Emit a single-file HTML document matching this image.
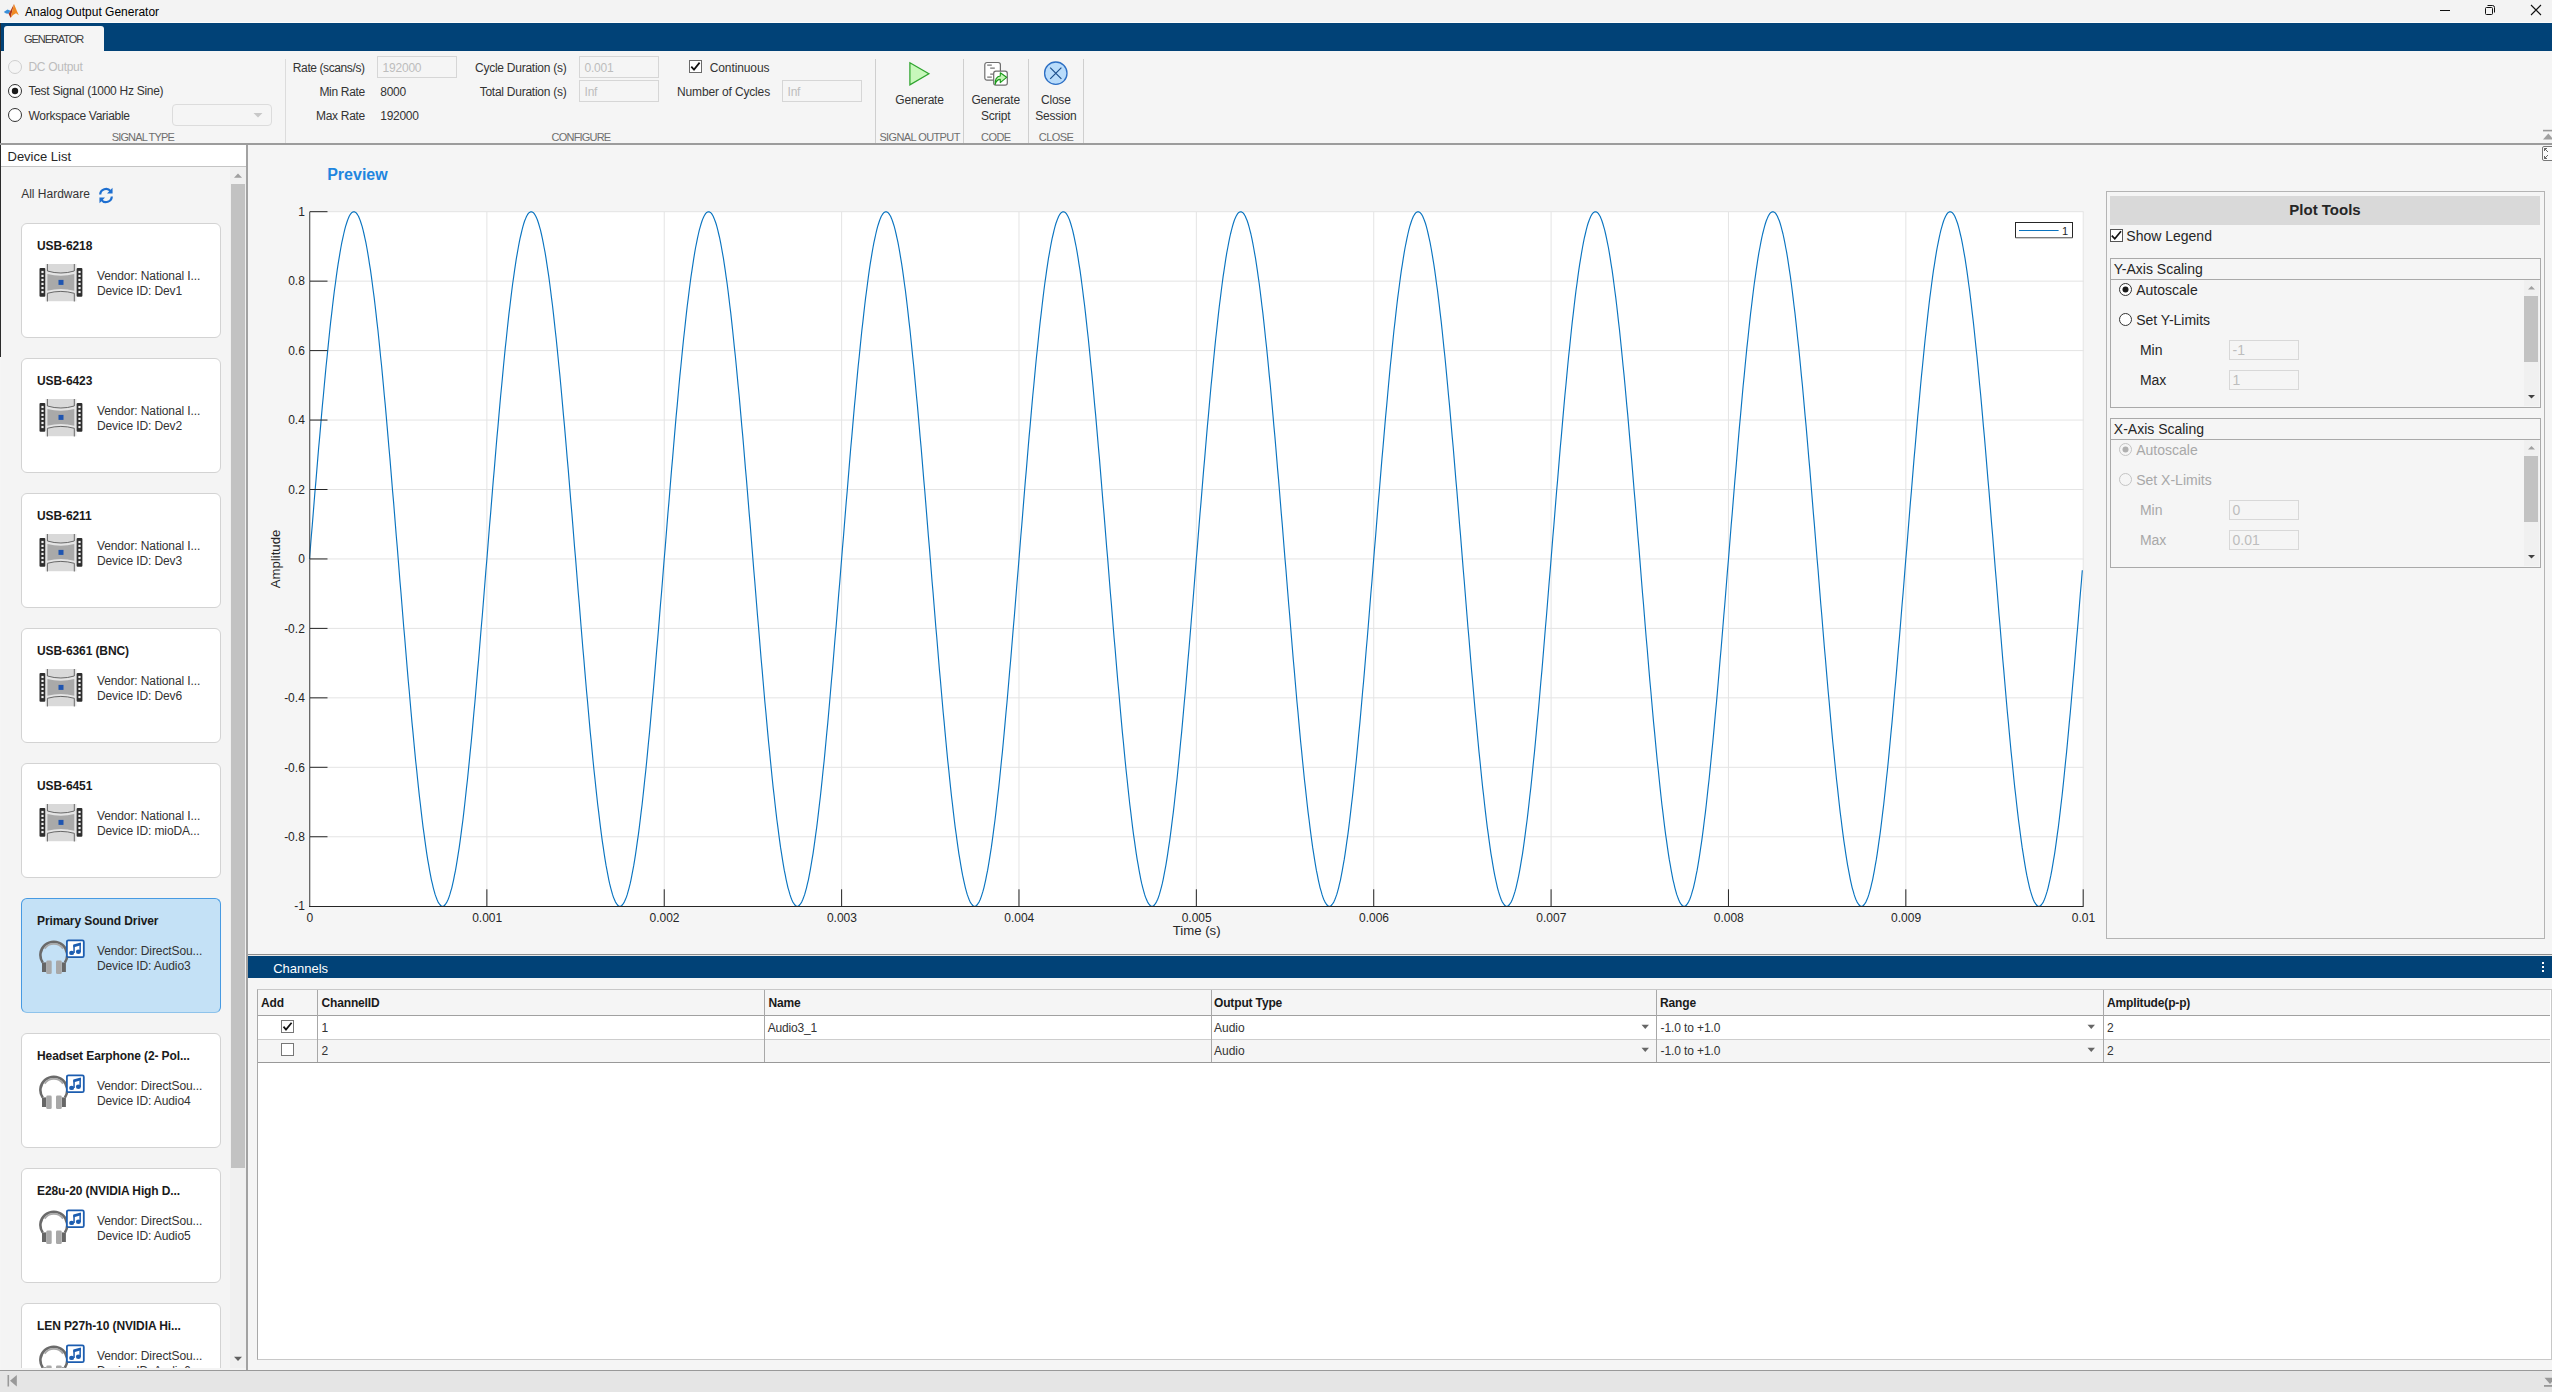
<!DOCTYPE html>
<html><head><meta charset="utf-8"><title>Analog Output Generator</title>
<style>
html,body{margin:0;padding:0;}
body{width:2552px;height:1392px;position:relative;overflow:hidden;background:#f5f5f5;font-family:"Liberation Sans", sans-serif;}
</style></head><body>
<div style="position:absolute;left:0px;top:0px;width:2552px;height:22px;background:#f3f3f3"></div><div style="position:absolute;left:0px;top:22px;width:2552px;height:1px;background:#fbfbfb"></div><svg style="position:absolute;left:0;top:0" width="24" height="22" viewBox="0 0 24 22">
<polygon points="3.8,12 7.5,9.6 10.5,10.8 8.6,13.8 6,13.4" fill="#3b8fd9"/>
<polygon points="8.6,13.8 10.5,10.8 14,4 12,12 10.6,17.9" fill="#b0361c"/>
<polygon points="14,4 16.5,10 18.8,15.2 16,13.2 13,15 10.6,17.9 12,12" fill="#f08a24"/>
</svg><div style="position:absolute;left:25px;top:5.54px;font-size:12px;line-height:13.80px;color:#000;font-weight:400;white-space:nowrap;">Analog Output Generator</div><div style="position:absolute;left:2440px;top:10px;width:10px;height:1px;background:#111"></div><svg style="position:absolute;left:2480px;top:0" width="70" height="22" viewBox="2480 0 70 22">
<rect x="2485.5" y="7.5" width="7" height="7" rx="1" fill="none" stroke="#111" stroke-width="1"/>
<path d="M2487.5 5.5 h5 a2 2 0 0 1 2 2 v5" fill="none" stroke="#111" stroke-width="1"/>
<path d="M2531 5 L2541 15 M2541 5 L2531 15" stroke="#111" stroke-width="1.1"/>
</svg><div style="position:absolute;left:0px;top:23px;width:2552px;height:28px;background:#014277"></div><div style="position:absolute;left:0px;top:23px;width:1px;height:334px;background:#2b2b2b"></div><div style="position:absolute;left:4px;top:26px;width:100px;height:25px;background:#f5f5f5;border-radius:3px 3px 0 0"></div><div style="position:absolute;left:24px;top:32.56px;font-size:11px;line-height:12.65px;color:#3c3c3c;font-weight:400;white-space:nowrap;letter-spacing:-1.05px;">GENERATOR</div><div style="position:absolute;left:1px;top:51px;width:2551px;height:92px;background:#f5f5f5"></div><div style="position:absolute;left:0px;top:143px;width:2552px;height:2px;background:#9c9c9c"></div><svg style="position:absolute;left:7px;top:59px" width="16" height="16"><circle cx="8" cy="8" r="6.5" fill="#f5f5f5" stroke="#cfcfcf" stroke-width="1"/></svg><svg style="position:absolute;left:7px;top:83px" width="16" height="16"><circle cx="8" cy="8" r="6.5" fill="#fff" stroke="#333" stroke-width="1"/><circle cx="8" cy="8" r="3.2" fill="#1a1a1a"/></svg><svg style="position:absolute;left:7px;top:107px" width="16" height="16"><circle cx="8" cy="8" r="6.5" fill="#fff" stroke="#333" stroke-width="1"/></svg><div style="position:absolute;left:28.5px;top:61.14px;font-size:12px;line-height:13.80px;color:#bcbcbc;font-weight:400;white-space:nowrap;letter-spacing:-0.3px;">DC Output</div><div style="position:absolute;left:28.5px;top:85.24px;font-size:12px;line-height:13.80px;color:#333;font-weight:400;white-space:nowrap;letter-spacing:-0.28px;">Test Signal (1000 Hz Sine)</div><div style="position:absolute;left:28.5px;top:109.94px;font-size:12px;line-height:13.80px;color:#333;font-weight:400;white-space:nowrap;letter-spacing:-0.28px;">Workspace Variable</div><div style="position:absolute;left:172px;top:104px;width:98px;height:20px;border:1px solid #dcdcdc;border-radius:4px;background:#f5f5f5"></div><svg style="position:absolute;left:252px;top:110px" width="12" height="10"><path d="M1.5 3 L10.5 3 L6 7.5 Z" fill="#c8c8c8"/></svg><div style="position:absolute;left:111.7px;top:131.36px;font-size:11px;line-height:12.65px;color:#6e6e6e;font-weight:400;white-space:nowrap;letter-spacing:-0.85px;">SIGNAL TYPE</div><div style="position:absolute;left:285px;top:59px;width:1px;height:84px;background:#dcdcdc"></div><div style="position:absolute;right:2187.4px;top:61.94px;font-size:12px;line-height:13.80px;color:#333;font-weight:400;white-space:nowrap;letter-spacing:-0.4px;">Rate (scans/s)</div><div style="position:absolute;right:2187px;top:85.94px;font-size:12px;line-height:13.80px;color:#333;font-weight:400;white-space:nowrap;letter-spacing:-0.3px;">Min Rate</div><div style="position:absolute;right:2187px;top:109.94px;font-size:12px;line-height:13.80px;color:#333;font-weight:400;white-space:nowrap;letter-spacing:-0.3px;">Max Rate</div><div style="position:absolute;left:377px;top:56px;width:78px;height:20px;border:1px solid #d6d6d6;background:#f5f5f5"></div><div style="position:absolute;left:382.5px;top:61.54px;font-size:12px;line-height:13.80px;color:#bdbdbd;font-weight:400;white-space:nowrap;letter-spacing:-0.2px;">192000</div><div style="position:absolute;left:380.3px;top:85.94px;font-size:12px;line-height:13.80px;color:#333;font-weight:400;white-space:nowrap;letter-spacing:-0.3px;">8000</div><div style="position:absolute;left:380.3px;top:109.94px;font-size:12px;line-height:13.80px;color:#333;font-weight:400;white-space:nowrap;letter-spacing:-0.3px;">192000</div><div style="position:absolute;right:1985.5px;top:61.94px;font-size:12px;line-height:13.80px;color:#333;font-weight:400;white-space:nowrap;letter-spacing:-0.25px;">Cycle Duration (s)</div><div style="position:absolute;right:1985.5px;top:85.94px;font-size:12px;line-height:13.80px;color:#333;font-weight:400;white-space:nowrap;letter-spacing:-0.25px;">Total Duration (s)</div><div style="position:absolute;left:579px;top:56px;width:78px;height:20px;border:1px solid #d6d6d6;background:#f5f5f5"></div><div style="position:absolute;left:584.5px;top:61.54px;font-size:12px;line-height:13.80px;color:#bdbdbd;font-weight:400;white-space:nowrap;letter-spacing:-0.2px;">0.001</div><div style="position:absolute;left:579px;top:80px;width:78px;height:20px;border:1px solid #d6d6d6;background:#f5f5f5"></div><div style="position:absolute;left:584.5px;top:85.54px;font-size:12px;line-height:13.80px;color:#bdbdbd;font-weight:400;white-space:nowrap;letter-spacing:-0.2px;">Inf</div><svg style="position:absolute;left:689px;top:60px" width="14" height="14"><rect x="0.5" y="0.5" width="12" height="12" fill="#fff" stroke="#6a6a6a"/><path d="M2.3 6.6 L5 9.6 L10.6 2.6" fill="none" stroke="#111" stroke-width="1.7"/></svg><div style="position:absolute;left:709.7px;top:61.94px;font-size:12px;line-height:13.80px;color:#333;font-weight:400;white-space:nowrap;letter-spacing:-0.1px;">Continuous</div><div style="position:absolute;right:1782px;top:85.94px;font-size:12px;line-height:13.80px;color:#333;font-weight:400;white-space:nowrap;letter-spacing:-0.15px;">Number of Cycles</div><div style="position:absolute;left:782px;top:80px;width:78px;height:20px;border:1px solid #d6d6d6;background:#f5f5f5"></div><div style="position:absolute;left:787.5px;top:85.54px;font-size:12px;line-height:13.80px;color:#bdbdbd;font-weight:400;white-space:nowrap;letter-spacing:-0.2px;">Inf</div><div style="position:absolute;left:81px;width:1000px;text-align:center;top:130.86px;font-size:11px;line-height:12.65px;color:#6e6e6e;font-weight:400;white-space:nowrap;letter-spacing:-0.8px;">CONFIGURE</div><div style="position:absolute;left:875px;top:59px;width:1px;height:84px;background:#cfcfcf"></div><svg style="position:absolute;left:905px;top:58px" width="30" height="32"><path d="M4.9 4.8 L23.9 15.7 L4.9 26.9 Z" fill="#c8f8bb" stroke="#30a530" stroke-width="1.25" stroke-linejoin="miter"/></svg><div style="position:absolute;left:419.5px;width:1000px;text-align:center;top:94.14px;font-size:12px;line-height:13.80px;color:#333;font-weight:400;white-space:nowrap;letter-spacing:-0.2px;">Generate</div><div style="position:absolute;left:419.6px;width:1000px;text-align:center;top:130.86px;font-size:11px;line-height:12.65px;color:#6e6e6e;font-weight:400;white-space:nowrap;letter-spacing:-0.6px;">SIGNAL OUTPUT</div><div style="position:absolute;left:963px;top:59px;width:1px;height:84px;background:#cfcfcf"></div><svg style="position:absolute;left:980px;top:58px" width="32" height="32">
<rect x="4.8" y="4.5" width="15.6" height="17.6" rx="2.2" fill="#fff" stroke="#6e6e6e" stroke-width="1.2"/>
<path d="M7.2 7.1 h4.6 M10.2 10.2 h4.6 M10.2 16.1 h3.4 M7.2 19.2 h4.6" stroke="#777" stroke-width="1.2"/>
<rect x="13.7" y="13.2" width="13.6" height="14" rx="2.2" fill="#fff" stroke="#6e6e6e" stroke-width="1.2"/>
<path d="M20.3 14.7 L26.6 19.3 L20.3 24.6 V21.4 C17.5 21.4 16 23.5 15.2 26.4 C14.8 22 16.5 18.2 20.3 18 Z" fill="#c3f5b5" stroke="#1a9a1a" stroke-width="1.1" stroke-linejoin="round"/>
</svg><div style="position:absolute;left:495.70000000000005px;width:1000px;text-align:center;top:94.14px;font-size:12px;line-height:13.80px;color:#333;font-weight:400;white-space:nowrap;letter-spacing:-0.2px;">Generate</div><div style="position:absolute;left:495.70000000000005px;width:1000px;text-align:center;top:109.94px;font-size:12px;line-height:13.80px;color:#333;font-weight:400;white-space:nowrap;letter-spacing:-0.2px;">Script</div><div style="position:absolute;left:495.79999999999995px;width:1000px;text-align:center;top:130.86px;font-size:11px;line-height:12.65px;color:#6e6e6e;font-weight:400;white-space:nowrap;letter-spacing:-0.6px;">CODE</div><div style="position:absolute;left:1028px;top:59px;width:1px;height:84px;background:#cfcfcf"></div><svg style="position:absolute;left:1040px;top:58px" width="32" height="32">
<circle cx="15.8" cy="15.2" r="11.2" fill="#b9dcfb" stroke="#2d6fc4" stroke-width="1.3"/>
<path d="M10.2 9.6 L21.4 20.8 M21.4 9.6 L10.2 20.8" stroke="#1d4f8c" stroke-width="1.2"/>
</svg><div style="position:absolute;left:555.8px;width:1000px;text-align:center;top:94.14px;font-size:12px;line-height:13.80px;color:#333;font-weight:400;white-space:nowrap;letter-spacing:-0.2px;">Close</div><div style="position:absolute;left:555.8px;width:1000px;text-align:center;top:109.94px;font-size:12px;line-height:13.80px;color:#333;font-weight:400;white-space:nowrap;letter-spacing:-0.2px;">Session</div><div style="position:absolute;left:556px;width:1000px;text-align:center;top:130.86px;font-size:11px;line-height:12.65px;color:#6e6e6e;font-weight:400;white-space:nowrap;letter-spacing:-0.6px;">CLOSE</div><div style="position:absolute;left:1083px;top:59px;width:1px;height:84px;background:#cfcfcf"></div><svg style="position:absolute;left:2540px;top:126px" width="12" height="16"><rect x="3" y="3.8" width="10" height="1.6" fill="#999"/><path d="M3 13.5 L8.3 7.5 L13.5 13.5 Z" fill="#a0a0a0"/></svg><div style="position:absolute;left:1px;top:145px;width:245px;height:21px;background:#fff"></div><div style="position:absolute;left:0px;top:145px;width:1px;height:212px;background:#2b2b2b"></div><div style="position:absolute;left:7.5px;top:149.82px;font-size:13px;line-height:14.95px;color:#262626;font-weight:400;white-space:nowrap;">Device List</div><div style="position:absolute;left:1px;top:166px;width:245px;height:1px;background:#c4c4c4"></div><div style="position:absolute;left:1px;top:167px;width:245px;height:1203px;background:#f4f4f4"></div><div style="position:absolute;left:246px;top:145px;width:2px;height:1225px;background:#a2a2a2"></div><div style="position:absolute;left:21.2px;top:187.94px;font-size:12px;line-height:13.80px;color:#333;font-weight:400;white-space:nowrap;">All Hardware</div><svg style="position:absolute;left:96px;top:185px" width="20" height="20" viewBox="0 0 20 20">
<path d="M4.2 9.5 A5.8 5.8 0 0 1 14.6 6.2" fill="none" stroke="#1e6fd0" stroke-width="2.2"/>
<path d="M16.5 2.8 L16.6 8.6 L11 8.4 Z" fill="#1e6fd0"/>
<path d="M15.8 11.5 A5.8 5.8 0 0 1 5.4 14.8" fill="none" stroke="#1e6fd0" stroke-width="2.2"/>
<path d="M3.5 18.2 L3.4 12.4 L9 12.6 Z" fill="#1e6fd0"/>
</svg><div style="position:absolute;left:0;top:167px;width:229px;height:1201px;overflow:hidden"><div style="position:absolute;left:21px;top:56.0px;width:198px;height:113px;background:#fff;border:1px solid #d3d3d3;border-radius:6px"></div><div style="position:absolute;left:37px;top:72.94px;font-size:12px;line-height:13.80px;color:#1a1a1a;font-weight:700;white-space:nowrap;letter-spacing:-0.1px;">USB-6218</div><div style="position:absolute;left:96.9px;top:102.64px;font-size:12px;line-height:13.80px;color:#333;font-weight:400;white-space:nowrap;letter-spacing:-0.1px;">Vendor: National I...</div><div style="position:absolute;left:96.9px;top:117.64px;font-size:12px;line-height:13.80px;color:#333;font-weight:400;white-space:nowrap;letter-spacing:-0.1px;">Device ID: Dev1</div><svg style="position:absolute;left:39.0px;top:97.0px" width="44" height="38" viewBox="0 0 44 38">
<rect x="6.6" y="-0.3" width="30.8" height="37.6" fill="#e4e4e4"/>
<path d="M8.4 0 V7 Q21.85 11 35.3 7 V0 Z" fill="#d9d9d9"/>
<path d="M8.4 37 V29.3 Q21.85 25.5 35.3 29.3 V37 Z" fill="#d9d9d9"/>
<path d="M8.4 10 Q21.85 13.6 35.3 10 V26.7 Q21.85 23.1 8.4 26.7 Z" fill="#a9a9a9"/>
<path d="M8.4 -0.5 V7 Q21.85 11 35.3 7 V-0.5" fill="none" stroke="#5a5a5a" stroke-width="0.9"/>
<path d="M8.4 37.5 V29.3 Q21.85 25.5 35.3 29.3 V37.5" fill="none" stroke="#5a5a5a" stroke-width="0.9"/>
<rect x="0.5" y="4.1" width="5.8" height="28.6" rx="1" fill="#2e2e2e"/>
<rect x="37.6" y="4.1" width="5.8" height="28.6" rx="1" fill="#2e2e2e"/>
<g fill="#f2f2f2"><rect x="2.4" y="6.9" width="2.2" height="2.2"/><rect x="39.4" y="6.9" width="2.2" height="2.2"/><rect x="2.4" y="10.8" width="2.2" height="2.2"/><rect x="39.4" y="10.8" width="2.2" height="2.2"/><rect x="2.4" y="14.8" width="2.2" height="2.2"/><rect x="39.4" y="14.8" width="2.2" height="2.2"/><rect x="2.4" y="18.8" width="2.2" height="2.2"/><rect x="39.4" y="18.8" width="2.2" height="2.2"/><rect x="2.4" y="22.9" width="2.2" height="2.2"/><rect x="39.4" y="22.9" width="2.2" height="2.2"/><rect x="2.4" y="26.9" width="2.2" height="2.2"/><rect x="39.4" y="26.9" width="2.2" height="2.2"/></g>
<rect x="19.5" y="15.9" width="5" height="5" fill="#1f55b0"/>
</svg><div style="position:absolute;left:21px;top:191.0px;width:198px;height:113px;background:#fff;border:1px solid #d3d3d3;border-radius:6px"></div><div style="position:absolute;left:37px;top:207.94px;font-size:12px;line-height:13.80px;color:#1a1a1a;font-weight:700;white-space:nowrap;letter-spacing:-0.1px;">USB-6423</div><div style="position:absolute;left:96.9px;top:237.64px;font-size:12px;line-height:13.80px;color:#333;font-weight:400;white-space:nowrap;letter-spacing:-0.1px;">Vendor: National I...</div><div style="position:absolute;left:96.9px;top:252.64px;font-size:12px;line-height:13.80px;color:#333;font-weight:400;white-space:nowrap;letter-spacing:-0.1px;">Device ID: Dev2</div><svg style="position:absolute;left:39.0px;top:232.0px" width="44" height="38" viewBox="0 0 44 38">
<rect x="6.6" y="-0.3" width="30.8" height="37.6" fill="#e4e4e4"/>
<path d="M8.4 0 V7 Q21.85 11 35.3 7 V0 Z" fill="#d9d9d9"/>
<path d="M8.4 37 V29.3 Q21.85 25.5 35.3 29.3 V37 Z" fill="#d9d9d9"/>
<path d="M8.4 10 Q21.85 13.6 35.3 10 V26.7 Q21.85 23.1 8.4 26.7 Z" fill="#a9a9a9"/>
<path d="M8.4 -0.5 V7 Q21.85 11 35.3 7 V-0.5" fill="none" stroke="#5a5a5a" stroke-width="0.9"/>
<path d="M8.4 37.5 V29.3 Q21.85 25.5 35.3 29.3 V37.5" fill="none" stroke="#5a5a5a" stroke-width="0.9"/>
<rect x="0.5" y="4.1" width="5.8" height="28.6" rx="1" fill="#2e2e2e"/>
<rect x="37.6" y="4.1" width="5.8" height="28.6" rx="1" fill="#2e2e2e"/>
<g fill="#f2f2f2"><rect x="2.4" y="6.9" width="2.2" height="2.2"/><rect x="39.4" y="6.9" width="2.2" height="2.2"/><rect x="2.4" y="10.8" width="2.2" height="2.2"/><rect x="39.4" y="10.8" width="2.2" height="2.2"/><rect x="2.4" y="14.8" width="2.2" height="2.2"/><rect x="39.4" y="14.8" width="2.2" height="2.2"/><rect x="2.4" y="18.8" width="2.2" height="2.2"/><rect x="39.4" y="18.8" width="2.2" height="2.2"/><rect x="2.4" y="22.9" width="2.2" height="2.2"/><rect x="39.4" y="22.9" width="2.2" height="2.2"/><rect x="2.4" y="26.9" width="2.2" height="2.2"/><rect x="39.4" y="26.9" width="2.2" height="2.2"/></g>
<rect x="19.5" y="15.9" width="5" height="5" fill="#1f55b0"/>
</svg><div style="position:absolute;left:21px;top:326.0px;width:198px;height:113px;background:#fff;border:1px solid #d3d3d3;border-radius:6px"></div><div style="position:absolute;left:37px;top:342.94px;font-size:12px;line-height:13.80px;color:#1a1a1a;font-weight:700;white-space:nowrap;letter-spacing:-0.1px;">USB-6211</div><div style="position:absolute;left:96.9px;top:372.64px;font-size:12px;line-height:13.80px;color:#333;font-weight:400;white-space:nowrap;letter-spacing:-0.1px;">Vendor: National I...</div><div style="position:absolute;left:96.9px;top:387.64px;font-size:12px;line-height:13.80px;color:#333;font-weight:400;white-space:nowrap;letter-spacing:-0.1px;">Device ID: Dev3</div><svg style="position:absolute;left:39.0px;top:367.0px" width="44" height="38" viewBox="0 0 44 38">
<rect x="6.6" y="-0.3" width="30.8" height="37.6" fill="#e4e4e4"/>
<path d="M8.4 0 V7 Q21.85 11 35.3 7 V0 Z" fill="#d9d9d9"/>
<path d="M8.4 37 V29.3 Q21.85 25.5 35.3 29.3 V37 Z" fill="#d9d9d9"/>
<path d="M8.4 10 Q21.85 13.6 35.3 10 V26.7 Q21.85 23.1 8.4 26.7 Z" fill="#a9a9a9"/>
<path d="M8.4 -0.5 V7 Q21.85 11 35.3 7 V-0.5" fill="none" stroke="#5a5a5a" stroke-width="0.9"/>
<path d="M8.4 37.5 V29.3 Q21.85 25.5 35.3 29.3 V37.5" fill="none" stroke="#5a5a5a" stroke-width="0.9"/>
<rect x="0.5" y="4.1" width="5.8" height="28.6" rx="1" fill="#2e2e2e"/>
<rect x="37.6" y="4.1" width="5.8" height="28.6" rx="1" fill="#2e2e2e"/>
<g fill="#f2f2f2"><rect x="2.4" y="6.9" width="2.2" height="2.2"/><rect x="39.4" y="6.9" width="2.2" height="2.2"/><rect x="2.4" y="10.8" width="2.2" height="2.2"/><rect x="39.4" y="10.8" width="2.2" height="2.2"/><rect x="2.4" y="14.8" width="2.2" height="2.2"/><rect x="39.4" y="14.8" width="2.2" height="2.2"/><rect x="2.4" y="18.8" width="2.2" height="2.2"/><rect x="39.4" y="18.8" width="2.2" height="2.2"/><rect x="2.4" y="22.9" width="2.2" height="2.2"/><rect x="39.4" y="22.9" width="2.2" height="2.2"/><rect x="2.4" y="26.9" width="2.2" height="2.2"/><rect x="39.4" y="26.9" width="2.2" height="2.2"/></g>
<rect x="19.5" y="15.9" width="5" height="5" fill="#1f55b0"/>
</svg><div style="position:absolute;left:21px;top:461.0px;width:198px;height:113px;background:#fff;border:1px solid #d3d3d3;border-radius:6px"></div><div style="position:absolute;left:37px;top:477.94px;font-size:12px;line-height:13.80px;color:#1a1a1a;font-weight:700;white-space:nowrap;letter-spacing:-0.1px;">USB-6361 (BNC)</div><div style="position:absolute;left:96.9px;top:507.64px;font-size:12px;line-height:13.80px;color:#333;font-weight:400;white-space:nowrap;letter-spacing:-0.1px;">Vendor: National I...</div><div style="position:absolute;left:96.9px;top:522.64px;font-size:12px;line-height:13.80px;color:#333;font-weight:400;white-space:nowrap;letter-spacing:-0.1px;">Device ID: Dev6</div><svg style="position:absolute;left:39.0px;top:502.0px" width="44" height="38" viewBox="0 0 44 38">
<rect x="6.6" y="-0.3" width="30.8" height="37.6" fill="#e4e4e4"/>
<path d="M8.4 0 V7 Q21.85 11 35.3 7 V0 Z" fill="#d9d9d9"/>
<path d="M8.4 37 V29.3 Q21.85 25.5 35.3 29.3 V37 Z" fill="#d9d9d9"/>
<path d="M8.4 10 Q21.85 13.6 35.3 10 V26.7 Q21.85 23.1 8.4 26.7 Z" fill="#a9a9a9"/>
<path d="M8.4 -0.5 V7 Q21.85 11 35.3 7 V-0.5" fill="none" stroke="#5a5a5a" stroke-width="0.9"/>
<path d="M8.4 37.5 V29.3 Q21.85 25.5 35.3 29.3 V37.5" fill="none" stroke="#5a5a5a" stroke-width="0.9"/>
<rect x="0.5" y="4.1" width="5.8" height="28.6" rx="1" fill="#2e2e2e"/>
<rect x="37.6" y="4.1" width="5.8" height="28.6" rx="1" fill="#2e2e2e"/>
<g fill="#f2f2f2"><rect x="2.4" y="6.9" width="2.2" height="2.2"/><rect x="39.4" y="6.9" width="2.2" height="2.2"/><rect x="2.4" y="10.8" width="2.2" height="2.2"/><rect x="39.4" y="10.8" width="2.2" height="2.2"/><rect x="2.4" y="14.8" width="2.2" height="2.2"/><rect x="39.4" y="14.8" width="2.2" height="2.2"/><rect x="2.4" y="18.8" width="2.2" height="2.2"/><rect x="39.4" y="18.8" width="2.2" height="2.2"/><rect x="2.4" y="22.9" width="2.2" height="2.2"/><rect x="39.4" y="22.9" width="2.2" height="2.2"/><rect x="2.4" y="26.9" width="2.2" height="2.2"/><rect x="39.4" y="26.9" width="2.2" height="2.2"/></g>
<rect x="19.5" y="15.9" width="5" height="5" fill="#1f55b0"/>
</svg><div style="position:absolute;left:21px;top:596.0px;width:198px;height:113px;background:#fff;border:1px solid #d3d3d3;border-radius:6px"></div><div style="position:absolute;left:37px;top:612.94px;font-size:12px;line-height:13.80px;color:#1a1a1a;font-weight:700;white-space:nowrap;letter-spacing:-0.1px;">USB-6451</div><div style="position:absolute;left:96.9px;top:642.64px;font-size:12px;line-height:13.80px;color:#333;font-weight:400;white-space:nowrap;letter-spacing:-0.1px;">Vendor: National I...</div><div style="position:absolute;left:96.9px;top:657.64px;font-size:12px;line-height:13.80px;color:#333;font-weight:400;white-space:nowrap;letter-spacing:-0.1px;">Device ID: mioDA...</div><svg style="position:absolute;left:39.0px;top:637.0px" width="44" height="38" viewBox="0 0 44 38">
<rect x="6.6" y="-0.3" width="30.8" height="37.6" fill="#e4e4e4"/>
<path d="M8.4 0 V7 Q21.85 11 35.3 7 V0 Z" fill="#d9d9d9"/>
<path d="M8.4 37 V29.3 Q21.85 25.5 35.3 29.3 V37 Z" fill="#d9d9d9"/>
<path d="M8.4 10 Q21.85 13.6 35.3 10 V26.7 Q21.85 23.1 8.4 26.7 Z" fill="#a9a9a9"/>
<path d="M8.4 -0.5 V7 Q21.85 11 35.3 7 V-0.5" fill="none" stroke="#5a5a5a" stroke-width="0.9"/>
<path d="M8.4 37.5 V29.3 Q21.85 25.5 35.3 29.3 V37.5" fill="none" stroke="#5a5a5a" stroke-width="0.9"/>
<rect x="0.5" y="4.1" width="5.8" height="28.6" rx="1" fill="#2e2e2e"/>
<rect x="37.6" y="4.1" width="5.8" height="28.6" rx="1" fill="#2e2e2e"/>
<g fill="#f2f2f2"><rect x="2.4" y="6.9" width="2.2" height="2.2"/><rect x="39.4" y="6.9" width="2.2" height="2.2"/><rect x="2.4" y="10.8" width="2.2" height="2.2"/><rect x="39.4" y="10.8" width="2.2" height="2.2"/><rect x="2.4" y="14.8" width="2.2" height="2.2"/><rect x="39.4" y="14.8" width="2.2" height="2.2"/><rect x="2.4" y="18.8" width="2.2" height="2.2"/><rect x="39.4" y="18.8" width="2.2" height="2.2"/><rect x="2.4" y="22.9" width="2.2" height="2.2"/><rect x="39.4" y="22.9" width="2.2" height="2.2"/><rect x="2.4" y="26.9" width="2.2" height="2.2"/><rect x="39.4" y="26.9" width="2.2" height="2.2"/></g>
<rect x="19.5" y="15.9" width="5" height="5" fill="#1f55b0"/>
</svg><div style="position:absolute;left:21px;top:731.0px;width:198px;height:113px;background:#c4e1f6;border:1px solid #479ae2;border-bottom-color:#8ec3eb;border-radius:6px"></div><div style="position:absolute;left:37px;top:747.94px;font-size:12px;line-height:13.80px;color:#1a1a1a;font-weight:700;white-space:nowrap;letter-spacing:-0.1px;">Primary Sound Driver</div><div style="position:absolute;left:96.9px;top:777.64px;font-size:12px;line-height:13.80px;color:#333;font-weight:400;white-space:nowrap;letter-spacing:-0.1px;">Vendor: DirectSou...</div><div style="position:absolute;left:96.9px;top:792.64px;font-size:12px;line-height:13.80px;color:#333;font-weight:400;white-space:nowrap;letter-spacing:-0.1px;">Device ID: Audio3</div><svg style="position:absolute;left:39px;top:772.4px" width="48" height="36" viewBox="0 0 48 36">
<path d="M3.7 23.6 A13.4 13.4 0 1 1 25.9 23.6" fill="none" stroke="#6a6a6a" stroke-width="2.6"/>
<path d="M5.6 9.6 A11.4 11.4 0 0 1 24 9.6" fill="none" stroke="#a8a8a8" stroke-width="1.8"/>
<rect x="3" y="23.4" width="4.3" height="9.6" fill="#666"/>
<rect x="23" y="23.4" width="3.9" height="9.6" fill="#666"/>
<rect x="7.2" y="21.6" width="5.5" height="13.5" rx="1.4" fill="#a8a8a8"/>
<rect x="17" y="21.6" width="5.8" height="13.5" rx="1.4" fill="#a8a8a8"/>
<rect x="27.9" y="1.3" width="16.9" height="16.9" rx="1.5" fill="#fff" stroke="#1c5db0" stroke-width="1.8"/>
<path d="M34.3 5.6 L41.8 3.4 V6.2 L34.3 8.4 Z" fill="#1c5db0"/>
<rect x="34.3" y="6" width="1.5" height="8" fill="#1c5db0"/>
<rect x="40.4" y="4" width="1.5" height="8.8" fill="#1c5db0"/>
<ellipse cx="32.6" cy="13.9" rx="2.5" ry="2.2" fill="#1c5db0"/>
<ellipse cx="39.4" cy="12.7" rx="2.5" ry="2.2" fill="#1c5db0"/>
</svg><div style="position:absolute;left:21px;top:866.0px;width:198px;height:113px;background:#fff;border:1px solid #d3d3d3;border-radius:6px"></div><div style="position:absolute;left:37px;top:882.94px;font-size:12px;line-height:13.80px;color:#1a1a1a;font-weight:700;white-space:nowrap;letter-spacing:-0.1px;">Headset Earphone (2- Pol...</div><div style="position:absolute;left:96.9px;top:912.64px;font-size:12px;line-height:13.80px;color:#333;font-weight:400;white-space:nowrap;letter-spacing:-0.1px;">Vendor: DirectSou...</div><div style="position:absolute;left:96.9px;top:927.64px;font-size:12px;line-height:13.80px;color:#333;font-weight:400;white-space:nowrap;letter-spacing:-0.1px;">Device ID: Audio4</div><svg style="position:absolute;left:39px;top:907.3999999999999px" width="48" height="36" viewBox="0 0 48 36">
<path d="M3.7 23.6 A13.4 13.4 0 1 1 25.9 23.6" fill="none" stroke="#6a6a6a" stroke-width="2.6"/>
<path d="M5.6 9.6 A11.4 11.4 0 0 1 24 9.6" fill="none" stroke="#a8a8a8" stroke-width="1.8"/>
<rect x="3" y="23.4" width="4.3" height="9.6" fill="#666"/>
<rect x="23" y="23.4" width="3.9" height="9.6" fill="#666"/>
<rect x="7.2" y="21.6" width="5.5" height="13.5" rx="1.4" fill="#a8a8a8"/>
<rect x="17" y="21.6" width="5.8" height="13.5" rx="1.4" fill="#a8a8a8"/>
<rect x="27.9" y="1.3" width="16.9" height="16.9" rx="1.5" fill="#fff" stroke="#1c5db0" stroke-width="1.8"/>
<path d="M34.3 5.6 L41.8 3.4 V6.2 L34.3 8.4 Z" fill="#1c5db0"/>
<rect x="34.3" y="6" width="1.5" height="8" fill="#1c5db0"/>
<rect x="40.4" y="4" width="1.5" height="8.8" fill="#1c5db0"/>
<ellipse cx="32.6" cy="13.9" rx="2.5" ry="2.2" fill="#1c5db0"/>
<ellipse cx="39.4" cy="12.7" rx="2.5" ry="2.2" fill="#1c5db0"/>
</svg><div style="position:absolute;left:21px;top:1001.0px;width:198px;height:113px;background:#fff;border:1px solid #d3d3d3;border-radius:6px"></div><div style="position:absolute;left:37px;top:1017.94px;font-size:12px;line-height:13.80px;color:#1a1a1a;font-weight:700;white-space:nowrap;letter-spacing:-0.1px;">E28u-20 (NVIDIA High D...</div><div style="position:absolute;left:96.9px;top:1047.64px;font-size:12px;line-height:13.80px;color:#333;font-weight:400;white-space:nowrap;letter-spacing:-0.1px;">Vendor: DirectSou...</div><div style="position:absolute;left:96.9px;top:1062.64px;font-size:12px;line-height:13.80px;color:#333;font-weight:400;white-space:nowrap;letter-spacing:-0.1px;">Device ID: Audio5</div><svg style="position:absolute;left:39px;top:1042.3999999999999px" width="48" height="36" viewBox="0 0 48 36">
<path d="M3.7 23.6 A13.4 13.4 0 1 1 25.9 23.6" fill="none" stroke="#6a6a6a" stroke-width="2.6"/>
<path d="M5.6 9.6 A11.4 11.4 0 0 1 24 9.6" fill="none" stroke="#a8a8a8" stroke-width="1.8"/>
<rect x="3" y="23.4" width="4.3" height="9.6" fill="#666"/>
<rect x="23" y="23.4" width="3.9" height="9.6" fill="#666"/>
<rect x="7.2" y="21.6" width="5.5" height="13.5" rx="1.4" fill="#a8a8a8"/>
<rect x="17" y="21.6" width="5.8" height="13.5" rx="1.4" fill="#a8a8a8"/>
<rect x="27.9" y="1.3" width="16.9" height="16.9" rx="1.5" fill="#fff" stroke="#1c5db0" stroke-width="1.8"/>
<path d="M34.3 5.6 L41.8 3.4 V6.2 L34.3 8.4 Z" fill="#1c5db0"/>
<rect x="34.3" y="6" width="1.5" height="8" fill="#1c5db0"/>
<rect x="40.4" y="4" width="1.5" height="8.8" fill="#1c5db0"/>
<ellipse cx="32.6" cy="13.9" rx="2.5" ry="2.2" fill="#1c5db0"/>
<ellipse cx="39.4" cy="12.7" rx="2.5" ry="2.2" fill="#1c5db0"/>
</svg><div style="position:absolute;left:21px;top:1136.0px;width:198px;height:113px;background:#fff;border:1px solid #d3d3d3;border-radius:6px"></div><div style="position:absolute;left:37px;top:1152.94px;font-size:12px;line-height:13.80px;color:#1a1a1a;font-weight:700;white-space:nowrap;letter-spacing:-0.1px;">LEN P27h-10 (NVIDIA Hi...</div><div style="position:absolute;left:96.9px;top:1182.64px;font-size:12px;line-height:13.80px;color:#333;font-weight:400;white-space:nowrap;letter-spacing:-0.1px;">Vendor: DirectSou...</div><div style="position:absolute;left:96.9px;top:1197.64px;font-size:12px;line-height:13.80px;color:#333;font-weight:400;white-space:nowrap;letter-spacing:-0.1px;">Device ID: Audio6</div><svg style="position:absolute;left:39px;top:1177.3999999999999px" width="48" height="36" viewBox="0 0 48 36">
<path d="M3.7 23.6 A13.4 13.4 0 1 1 25.9 23.6" fill="none" stroke="#6a6a6a" stroke-width="2.6"/>
<path d="M5.6 9.6 A11.4 11.4 0 0 1 24 9.6" fill="none" stroke="#a8a8a8" stroke-width="1.8"/>
<rect x="3" y="23.4" width="4.3" height="9.6" fill="#666"/>
<rect x="23" y="23.4" width="3.9" height="9.6" fill="#666"/>
<rect x="7.2" y="21.6" width="5.5" height="13.5" rx="1.4" fill="#a8a8a8"/>
<rect x="17" y="21.6" width="5.8" height="13.5" rx="1.4" fill="#a8a8a8"/>
<rect x="27.9" y="1.3" width="16.9" height="16.9" rx="1.5" fill="#fff" stroke="#1c5db0" stroke-width="1.8"/>
<path d="M34.3 5.6 L41.8 3.4 V6.2 L34.3 8.4 Z" fill="#1c5db0"/>
<rect x="34.3" y="6" width="1.5" height="8" fill="#1c5db0"/>
<rect x="40.4" y="4" width="1.5" height="8.8" fill="#1c5db0"/>
<ellipse cx="32.6" cy="13.9" rx="2.5" ry="2.2" fill="#1c5db0"/>
<ellipse cx="39.4" cy="12.7" rx="2.5" ry="2.2" fill="#1c5db0"/>
</svg></div><div style="position:absolute;left:230px;top:167px;width:16px;height:1201px;background:#f0f0f0"></div><div style="position:absolute;left:231px;top:183.6px;width:14px;height:984px;background:#c2c2c2"></div><svg style="position:absolute;left:230px;top:169px" width="16" height="12"><path d="M4 8.8 L8 4.6 L12 8.8 Z" fill="#a0a0a0"/></svg><svg style="position:absolute;left:230px;top:1353px" width="16" height="12"><path d="M4 3.8 L8 8 L12 3.8 Z" fill="#606060"/></svg><div style="position:absolute;left:248px;top:145px;width:2304px;height:809px;background:#f5f5f5"></div><svg style="position:absolute;left:2540px;top:144px" width="12" height="20"><rect x="2.5" y="2.5" width="12" height="14" rx="1.5" fill="#fafafa" stroke="#777" stroke-width="1"/><path d="M4.5 4.5 L8 8 M4.5 4.5 h2.5 M4.5 4.5 v2.5 M4.5 14.5 L8 11 M4.5 14.5 h2.5 M4.5 14.5 v-2.5" stroke="#555" stroke-width="0.9"/></svg><div style="position:absolute;left:327.2px;top:165.96px;font-size:16px;line-height:18.40px;color:#1f86df;font-weight:700;white-space:nowrap;">Preview</div><svg style="position:absolute;left:0;top:0" width="2552" height="1000" viewBox="0 0 2552 1000"><rect x="310" y="212" width="1773.2" height="694" fill="#fff"/><line x1="486.87" y1="212" x2="486.87" y2="906" stroke="#e4e4e4" stroke-width="1"/><line x1="664.24" y1="212" x2="664.24" y2="906" stroke="#e4e4e4" stroke-width="1"/><line x1="841.61" y1="212" x2="841.61" y2="906" stroke="#e4e4e4" stroke-width="1"/><line x1="1018.98" y1="212" x2="1018.98" y2="906" stroke="#e4e4e4" stroke-width="1"/><line x1="1196.35" y1="212" x2="1196.35" y2="906" stroke="#e4e4e4" stroke-width="1"/><line x1="1373.72" y1="212" x2="1373.72" y2="906" stroke="#e4e4e4" stroke-width="1"/><line x1="1551.09" y1="212" x2="1551.09" y2="906" stroke="#e4e4e4" stroke-width="1"/><line x1="1728.46" y1="212" x2="1728.46" y2="906" stroke="#e4e4e4" stroke-width="1"/><line x1="1905.83" y1="212" x2="1905.83" y2="906" stroke="#e4e4e4" stroke-width="1"/><line x1="2083.20" y1="212" x2="2083.20" y2="906" stroke="#e4e4e4" stroke-width="1"/><line x1="310" y1="211.70" x2="2083.7" y2="211.70" stroke="#e4e4e4" stroke-width="1"/><line x1="310" y1="281.15" x2="2083.7" y2="281.15" stroke="#e4e4e4" stroke-width="1"/><line x1="310" y1="350.60" x2="2083.7" y2="350.60" stroke="#e4e4e4" stroke-width="1"/><line x1="310" y1="420.05" x2="2083.7" y2="420.05" stroke="#e4e4e4" stroke-width="1"/><line x1="310" y1="489.50" x2="2083.7" y2="489.50" stroke="#e4e4e4" stroke-width="1"/><line x1="310" y1="558.95" x2="2083.7" y2="558.95" stroke="#e4e4e4" stroke-width="1"/><line x1="310" y1="628.40" x2="2083.7" y2="628.40" stroke="#e4e4e4" stroke-width="1"/><line x1="310" y1="697.85" x2="2083.7" y2="697.85" stroke="#e4e4e4" stroke-width="1"/><line x1="310" y1="767.30" x2="2083.7" y2="767.30" stroke="#e4e4e4" stroke-width="1"/><line x1="310" y1="836.75" x2="2083.7" y2="836.75" stroke="#e4e4e4" stroke-width="1"/><polyline points="309.5,559.0 310.4,547.6 311.3,536.2 312.3,524.9 313.2,513.6 314.1,502.4 315.0,491.2 316.0,480.1 316.9,469.1 317.8,458.1 318.7,447.3 319.7,436.6 320.6,426.1 321.5,415.6 322.4,405.4 323.4,395.3 324.3,385.3 325.2,375.6 326.1,366.0 327.1,356.7 328.0,347.6 328.9,338.7 329.8,330.0 330.7,321.6 331.7,313.4 332.6,305.5 333.5,297.9 334.4,290.5 335.4,283.5 336.3,276.7 337.2,270.2 338.1,264.1 339.1,258.2 340.0,252.7 340.9,247.5 341.8,242.7 342.8,238.1 343.7,234.0 344.6,230.1 345.5,226.7 346.5,223.5 347.4,220.8 348.3,218.4 349.2,216.3 350.1,214.7 351.1,213.4 352.0,212.4 352.9,211.9 353.8,211.7 354.8,211.9 355.7,212.4 356.6,213.4 357.5,214.7 358.5,216.3 359.4,218.4 360.3,220.8 361.2,223.5 362.2,226.7 363.1,230.1 364.0,234.0 364.9,238.1 365.9,242.7 366.8,247.5 367.7,252.7 368.6,258.2 369.5,264.1 370.5,270.2 371.4,276.7 372.3,283.5 373.2,290.5 374.2,297.9 375.1,305.5 376.0,313.4 376.9,321.6 377.9,330.0 378.8,338.7 379.7,347.6 380.6,356.7 381.6,366.0 382.5,375.6 383.4,385.3 384.3,395.3 385.3,405.4 386.2,415.6 387.1,426.1 388.0,436.6 388.9,447.3 389.9,458.1 390.8,469.1 391.7,480.1 392.6,491.2 393.6,502.4 394.5,513.6 395.4,524.9 396.3,536.2 397.3,547.6 398.2,559.0 399.1,570.3 400.0,581.7 401.0,593.0 401.9,604.3 402.8,615.5 403.7,626.7 404.7,637.8 405.6,648.8 406.5,659.8 407.4,670.6 408.3,681.3 409.3,691.8 410.2,702.3 411.1,712.5 412.0,722.6 413.0,732.6 413.9,742.3 414.8,751.9 415.7,761.2 416.7,770.3 417.6,779.2 418.5,787.9 419.4,796.3 420.4,804.5 421.3,812.4 422.2,820.0 423.1,827.4 424.1,834.4 425.0,841.2 425.9,847.7 426.8,853.8 427.7,859.7 428.7,865.2 429.6,870.4 430.5,875.2 431.4,879.8 432.4,883.9 433.3,887.8 434.2,891.2 435.1,894.4 436.1,897.1 437.0,899.5 437.9,901.6 438.8,903.2 439.8,904.5 440.7,905.5 441.6,906.0 442.5,906.2 443.5,906.0 444.4,905.5 445.3,904.5 446.2,903.2 447.1,901.6 448.1,899.5 449.0,897.1 449.9,894.4 450.8,891.2 451.8,887.8 452.7,883.9 453.6,879.8 454.5,875.2 455.5,870.4 456.4,865.2 457.3,859.7 458.2,853.8 459.2,847.7 460.1,841.2 461.0,834.4 461.9,827.4 462.9,820.0 463.8,812.4 464.7,804.5 465.6,796.3 466.5,787.9 467.5,779.2 468.4,770.3 469.3,761.2 470.2,751.9 471.2,742.3 472.1,732.6 473.0,722.6 473.9,712.5 474.9,702.3 475.8,691.8 476.7,681.3 477.6,670.6 478.6,659.8 479.5,648.8 480.4,637.8 481.3,626.7 482.3,615.5 483.2,604.3 484.1,593.0 485.0,581.7 485.9,570.3 486.9,559.0 487.8,547.6 488.7,536.2 489.6,524.9 490.6,513.6 491.5,502.4 492.4,491.2 493.3,480.1 494.3,469.1 495.2,458.1 496.1,447.3 497.0,436.6 498.0,426.1 498.9,415.6 499.8,405.4 500.7,395.3 501.7,385.3 502.6,375.6 503.5,366.0 504.4,356.7 505.3,347.6 506.3,338.7 507.2,330.0 508.1,321.6 509.0,313.4 510.0,305.5 510.9,297.9 511.8,290.5 512.7,283.5 513.7,276.7 514.6,270.2 515.5,264.1 516.4,258.2 517.4,252.7 518.3,247.5 519.2,242.7 520.1,238.1 521.1,234.0 522.0,230.1 522.9,226.7 523.8,223.5 524.7,220.8 525.7,218.4 526.6,216.3 527.5,214.7 528.4,213.4 529.4,212.4 530.3,211.9 531.2,211.7 532.1,211.9 533.1,212.4 534.0,213.4 534.9,214.7 535.8,216.3 536.8,218.4 537.7,220.8 538.6,223.5 539.5,226.7 540.5,230.1 541.4,234.0 542.3,238.1 543.2,242.7 544.1,247.5 545.1,252.7 546.0,258.2 546.9,264.1 547.8,270.2 548.8,276.7 549.7,283.5 550.6,290.5 551.5,297.9 552.5,305.5 553.4,313.4 554.3,321.6 555.2,330.0 556.2,338.7 557.1,347.6 558.0,356.7 558.9,366.0 559.9,375.6 560.8,385.3 561.7,395.3 562.6,405.4 563.5,415.6 564.5,426.1 565.4,436.6 566.3,447.3 567.2,458.1 568.2,469.1 569.1,480.1 570.0,491.2 570.9,502.4 571.9,513.6 572.8,524.9 573.7,536.2 574.6,547.6 575.6,558.9 576.5,570.3 577.4,581.7 578.3,593.0 579.3,604.3 580.2,615.5 581.1,626.7 582.0,637.8 582.9,648.8 583.9,659.8 584.8,670.6 585.7,681.3 586.6,691.8 587.6,702.3 588.5,712.5 589.4,722.6 590.3,732.6 591.3,742.3 592.2,751.9 593.1,761.2 594.0,770.3 595.0,779.2 595.9,787.9 596.8,796.3 597.7,804.5 598.7,812.4 599.6,820.0 600.5,827.4 601.4,834.4 602.3,841.2 603.3,847.7 604.2,853.8 605.1,859.7 606.0,865.2 607.0,870.4 607.9,875.2 608.8,879.8 609.7,883.9 610.7,887.8 611.6,891.2 612.5,894.4 613.4,897.1 614.4,899.5 615.3,901.6 616.2,903.2 617.1,904.5 618.0,905.5 619.0,906.0 619.9,906.2 620.8,906.0 621.7,905.5 622.7,904.5 623.6,903.2 624.5,901.6 625.4,899.5 626.4,897.1 627.3,894.4 628.2,891.2 629.1,887.8 630.1,883.9 631.0,879.8 631.9,875.2 632.8,870.4 633.8,865.2 634.7,859.7 635.6,853.8 636.5,847.7 637.4,841.2 638.4,834.4 639.3,827.4 640.2,820.0 641.1,812.4 642.1,804.5 643.0,796.3 643.9,787.9 644.8,779.2 645.8,770.3 646.7,761.2 647.6,751.9 648.5,742.3 649.5,732.6 650.4,722.6 651.3,712.5 652.2,702.3 653.2,691.8 654.1,681.3 655.0,670.6 655.9,659.8 656.8,648.8 657.8,637.8 658.7,626.7 659.6,615.5 660.5,604.3 661.5,593.0 662.4,581.7 663.3,570.3 664.2,559.0 665.2,547.6 666.1,536.2 667.0,524.9 667.9,513.6 668.9,502.4 669.8,491.2 670.7,480.1 671.6,469.1 672.6,458.1 673.5,447.3 674.4,436.6 675.3,426.1 676.2,415.6 677.2,405.4 678.1,395.3 679.0,385.3 679.9,375.6 680.9,366.0 681.8,356.7 682.7,347.6 683.6,338.7 684.6,330.0 685.5,321.6 686.4,313.4 687.3,305.5 688.3,297.9 689.2,290.5 690.1,283.5 691.0,276.7 692.0,270.2 692.9,264.1 693.8,258.2 694.7,252.7 695.6,247.5 696.6,242.7 697.5,238.1 698.4,234.0 699.3,230.1 700.3,226.7 701.2,223.5 702.1,220.8 703.0,218.4 704.0,216.3 704.9,214.7 705.8,213.4 706.7,212.4 707.7,211.9 708.6,211.7 709.5,211.9 710.4,212.4 711.4,213.4 712.3,214.7 713.2,216.3 714.1,218.4 715.0,220.8 716.0,223.5 716.9,226.7 717.8,230.1 718.7,234.0 719.7,238.1 720.6,242.7 721.5,247.5 722.4,252.7 723.4,258.2 724.3,264.1 725.2,270.2 726.1,276.7 727.1,283.5 728.0,290.5 728.9,297.9 729.8,305.5 730.8,313.4 731.7,321.6 732.6,330.0 733.5,338.7 734.4,347.6 735.4,356.7 736.3,366.0 737.2,375.6 738.1,385.3 739.1,395.3 740.0,405.4 740.9,415.6 741.8,426.1 742.8,436.6 743.7,447.3 744.6,458.1 745.5,469.1 746.5,480.1 747.4,491.2 748.3,502.4 749.2,513.6 750.2,524.9 751.1,536.2 752.0,547.6 752.9,558.9 753.8,570.3 754.8,581.7 755.7,593.0 756.6,604.3 757.5,615.5 758.5,626.7 759.4,637.8 760.3,648.8 761.2,659.8 762.2,670.6 763.1,681.3 764.0,691.8 764.9,702.3 765.9,712.5 766.8,722.6 767.7,732.6 768.6,742.3 769.6,751.9 770.5,761.2 771.4,770.3 772.3,779.2 773.2,787.9 774.2,796.3 775.1,804.5 776.0,812.4 776.9,820.0 777.9,827.4 778.8,834.4 779.7,841.2 780.6,847.7 781.6,853.8 782.5,859.7 783.4,865.2 784.3,870.4 785.3,875.2 786.2,879.8 787.1,883.9 788.0,887.8 789.0,891.2 789.9,894.4 790.8,897.1 791.7,899.5 792.6,901.6 793.6,903.2 794.5,904.5 795.4,905.5 796.3,906.0 797.3,906.2 798.2,906.0 799.1,905.5 800.0,904.5 801.0,903.2 801.9,901.6 802.8,899.5 803.7,897.1 804.7,894.4 805.6,891.2 806.5,887.8 807.4,883.9 808.4,879.8 809.3,875.2 810.2,870.4 811.1,865.2 812.0,859.7 813.0,853.8 813.9,847.7 814.8,841.2 815.7,834.4 816.7,827.4 817.6,820.0 818.5,812.4 819.4,804.5 820.4,796.3 821.3,787.9 822.2,779.2 823.1,770.3 824.1,761.2 825.0,751.9 825.9,742.3 826.8,732.6 827.8,722.6 828.7,712.5 829.6,702.3 830.5,691.8 831.4,681.3 832.4,670.6 833.3,659.8 834.2,648.8 835.1,637.8 836.1,626.7 837.0,615.5 837.9,604.3 838.8,593.0 839.8,581.7 840.7,570.3 841.6,559.0 842.5,547.6 843.5,536.2 844.4,524.9 845.3,513.6 846.2,502.4 847.2,491.2 848.1,480.1 849.0,469.1 849.9,458.1 850.8,447.3 851.8,436.6 852.7,426.1 853.6,415.6 854.5,405.4 855.5,395.3 856.4,385.3 857.3,375.6 858.2,366.0 859.2,356.7 860.1,347.6 861.0,338.7 861.9,330.0 862.9,321.6 863.8,313.4 864.7,305.5 865.6,297.9 866.6,290.5 867.5,283.5 868.4,276.7 869.3,270.2 870.2,264.1 871.2,258.2 872.1,252.7 873.0,247.5 873.9,242.7 874.9,238.1 875.8,234.0 876.7,230.1 877.6,226.7 878.6,223.5 879.5,220.8 880.4,218.4 881.3,216.3 882.3,214.7 883.2,213.4 884.1,212.4 885.0,211.9 886.0,211.7 886.9,211.9 887.8,212.4 888.7,213.4 889.6,214.7 890.6,216.3 891.5,218.4 892.4,220.8 893.3,223.5 894.3,226.7 895.2,230.1 896.1,234.0 897.0,238.1 898.0,242.7 898.9,247.5 899.8,252.7 900.7,258.2 901.7,264.1 902.6,270.2 903.5,276.7 904.4,283.5 905.4,290.5 906.3,297.9 907.2,305.5 908.1,313.4 909.0,321.6 910.0,330.0 910.9,338.7 911.8,347.6 912.7,356.7 913.7,366.0 914.6,375.6 915.5,385.3 916.4,395.3 917.4,405.4 918.3,415.6 919.2,426.1 920.1,436.6 921.1,447.3 922.0,458.1 922.9,469.1 923.8,480.1 924.8,491.2 925.7,502.4 926.6,513.6 927.5,524.9 928.4,536.2 929.4,547.6 930.3,558.9 931.2,570.3 932.1,581.7 933.1,593.0 934.0,604.3 934.9,615.5 935.8,626.7 936.8,637.8 937.7,648.8 938.6,659.8 939.5,670.6 940.5,681.3 941.4,691.8 942.3,702.3 943.2,712.5 944.2,722.6 945.1,732.6 946.0,742.3 946.9,751.9 947.8,761.2 948.8,770.3 949.7,779.2 950.6,787.9 951.5,796.3 952.5,804.5 953.4,812.4 954.3,820.0 955.2,827.4 956.2,834.4 957.1,841.2 958.0,847.7 958.9,853.8 959.9,859.7 960.8,865.2 961.7,870.4 962.6,875.2 963.6,879.8 964.5,883.9 965.4,887.8 966.3,891.2 967.2,894.4 968.2,897.1 969.1,899.5 970.0,901.6 970.9,903.2 971.9,904.5 972.8,905.5 973.7,906.0 974.6,906.2 975.6,906.0 976.5,905.5 977.4,904.5 978.3,903.2 979.3,901.6 980.2,899.5 981.1,897.1 982.0,894.4 983.0,891.2 983.9,887.8 984.8,883.9 985.7,879.8 986.6,875.2 987.6,870.4 988.5,865.2 989.4,859.7 990.3,853.8 991.3,847.7 992.2,841.2 993.1,834.4 994.0,827.4 995.0,820.0 995.9,812.4 996.8,804.5 997.7,796.3 998.7,787.9 999.6,779.2 1000.5,770.3 1001.4,761.2 1002.4,751.9 1003.3,742.3 1004.2,732.6 1005.1,722.6 1006.0,712.5 1007.0,702.3 1007.9,691.8 1008.8,681.3 1009.7,670.6 1010.7,659.8 1011.6,648.8 1012.5,637.8 1013.4,626.7 1014.4,615.5 1015.3,604.3 1016.2,593.0 1017.1,581.7 1018.1,570.3 1019.0,559.0 1019.9,547.6 1020.8,536.2 1021.8,524.9 1022.7,513.6 1023.6,502.4 1024.5,491.2 1025.4,480.1 1026.4,469.1 1027.3,458.1 1028.2,447.3 1029.1,436.6 1030.1,426.1 1031.0,415.6 1031.9,405.4 1032.8,395.3 1033.8,385.3 1034.7,375.6 1035.6,366.0 1036.5,356.7 1037.5,347.6 1038.4,338.7 1039.3,330.0 1040.2,321.6 1041.2,313.4 1042.1,305.5 1043.0,297.9 1043.9,290.5 1044.8,283.5 1045.8,276.7 1046.7,270.2 1047.6,264.1 1048.5,258.2 1049.5,252.7 1050.4,247.5 1051.3,242.7 1052.2,238.1 1053.2,234.0 1054.1,230.1 1055.0,226.7 1055.9,223.5 1056.9,220.8 1057.8,218.4 1058.7,216.3 1059.6,214.7 1060.6,213.4 1061.5,212.4 1062.4,211.9 1063.3,211.7 1064.2,211.9 1065.2,212.4 1066.1,213.4 1067.0,214.7 1067.9,216.3 1068.9,218.4 1069.8,220.8 1070.7,223.5 1071.6,226.7 1072.6,230.1 1073.5,234.0 1074.4,238.1 1075.3,242.7 1076.3,247.5 1077.2,252.7 1078.1,258.2 1079.0,264.1 1080.0,270.2 1080.9,276.7 1081.8,283.5 1082.7,290.5 1083.6,297.9 1084.6,305.5 1085.5,313.4 1086.4,321.6 1087.3,330.0 1088.3,338.7 1089.2,347.6 1090.1,356.7 1091.0,366.0 1092.0,375.6 1092.9,385.3 1093.8,395.3 1094.7,405.4 1095.7,415.6 1096.6,426.1 1097.5,436.6 1098.4,447.3 1099.4,458.1 1100.3,469.1 1101.2,480.1 1102.1,491.2 1103.0,502.4 1104.0,513.6 1104.9,524.9 1105.8,536.2 1106.7,547.6 1107.7,558.9 1108.6,570.3 1109.5,581.7 1110.4,593.0 1111.4,604.3 1112.3,615.5 1113.2,626.7 1114.1,637.8 1115.1,648.8 1116.0,659.8 1116.9,670.6 1117.8,681.3 1118.8,691.8 1119.7,702.3 1120.6,712.5 1121.5,722.6 1122.4,732.6 1123.4,742.3 1124.3,751.9 1125.2,761.2 1126.1,770.3 1127.1,779.2 1128.0,787.9 1128.9,796.3 1129.8,804.5 1130.8,812.4 1131.7,820.0 1132.6,827.4 1133.5,834.4 1134.5,841.2 1135.4,847.7 1136.3,853.8 1137.2,859.7 1138.2,865.2 1139.1,870.4 1140.0,875.2 1140.9,879.8 1141.8,883.9 1142.8,887.8 1143.7,891.2 1144.6,894.4 1145.5,897.1 1146.5,899.5 1147.4,901.6 1148.3,903.2 1149.2,904.5 1150.2,905.5 1151.1,906.0 1152.0,906.2 1152.9,906.0 1153.9,905.5 1154.8,904.5 1155.7,903.2 1156.6,901.6 1157.6,899.5 1158.5,897.1 1159.4,894.4 1160.3,891.2 1161.2,887.8 1162.2,883.9 1163.1,879.8 1164.0,875.2 1164.9,870.4 1165.9,865.2 1166.8,859.7 1167.7,853.8 1168.6,847.7 1169.6,841.2 1170.5,834.4 1171.4,827.4 1172.3,820.0 1173.3,812.4 1174.2,804.5 1175.1,796.3 1176.0,787.9 1177.0,779.2 1177.9,770.3 1178.8,761.2 1179.7,751.9 1180.6,742.3 1181.6,732.6 1182.5,722.6 1183.4,712.5 1184.3,702.3 1185.3,691.8 1186.2,681.3 1187.1,670.6 1188.0,659.8 1189.0,648.8 1189.9,637.8 1190.8,626.7 1191.7,615.5 1192.7,604.3 1193.6,593.0 1194.5,581.7 1195.4,570.3 1196.3,559.0 1197.3,547.6 1198.2,536.2 1199.1,524.9 1200.0,513.6 1201.0,502.4 1201.9,491.2 1202.8,480.1 1203.7,469.1 1204.7,458.1 1205.6,447.3 1206.5,436.6 1207.4,426.1 1208.4,415.6 1209.3,405.4 1210.2,395.3 1211.1,385.3 1212.1,375.6 1213.0,366.0 1213.9,356.7 1214.8,347.6 1215.7,338.7 1216.7,330.0 1217.6,321.6 1218.5,313.4 1219.4,305.5 1220.4,297.9 1221.3,290.5 1222.2,283.5 1223.1,276.7 1224.1,270.2 1225.0,264.1 1225.9,258.2 1226.8,252.7 1227.8,247.5 1228.7,242.7 1229.6,238.1 1230.5,234.0 1231.5,230.1 1232.4,226.7 1233.3,223.5 1234.2,220.8 1235.1,218.4 1236.1,216.3 1237.0,214.7 1237.9,213.4 1238.8,212.4 1239.8,211.9 1240.7,211.7 1241.6,211.9 1242.5,212.4 1243.5,213.4 1244.4,214.7 1245.3,216.3 1246.2,218.4 1247.2,220.8 1248.1,223.5 1249.0,226.7 1249.9,230.1 1250.9,234.0 1251.8,238.1 1252.7,242.7 1253.6,247.5 1254.5,252.7 1255.5,258.2 1256.4,264.1 1257.3,270.2 1258.2,276.7 1259.2,283.5 1260.1,290.5 1261.0,297.9 1261.9,305.5 1262.9,313.4 1263.8,321.6 1264.7,330.0 1265.6,338.7 1266.6,347.6 1267.5,356.7 1268.4,366.0 1269.3,375.6 1270.3,385.3 1271.2,395.3 1272.1,405.4 1273.0,415.6 1273.9,426.1 1274.9,436.6 1275.8,447.3 1276.7,458.1 1277.6,469.1 1278.6,480.1 1279.5,491.2 1280.4,502.4 1281.3,513.6 1282.3,524.9 1283.2,536.2 1284.1,547.6 1285.0,558.9 1286.0,570.3 1286.9,581.7 1287.8,593.0 1288.7,604.3 1289.7,615.5 1290.6,626.7 1291.5,637.8 1292.4,648.8 1293.3,659.8 1294.3,670.6 1295.2,681.3 1296.1,691.8 1297.0,702.3 1298.0,712.5 1298.9,722.6 1299.8,732.6 1300.7,742.3 1301.7,751.9 1302.6,761.2 1303.5,770.3 1304.4,779.2 1305.4,787.9 1306.3,796.3 1307.2,804.5 1308.1,812.4 1309.1,820.0 1310.0,827.4 1310.9,834.4 1311.8,841.2 1312.7,847.7 1313.7,853.8 1314.6,859.7 1315.5,865.2 1316.4,870.4 1317.4,875.2 1318.3,879.8 1319.2,883.9 1320.1,887.8 1321.1,891.2 1322.0,894.4 1322.9,897.1 1323.8,899.5 1324.8,901.6 1325.7,903.2 1326.6,904.5 1327.5,905.5 1328.5,906.0 1329.4,906.2 1330.3,906.0 1331.2,905.5 1332.1,904.5 1333.1,903.2 1334.0,901.6 1334.9,899.5 1335.8,897.1 1336.8,894.4 1337.7,891.2 1338.6,887.8 1339.5,883.9 1340.5,879.8 1341.4,875.2 1342.3,870.4 1343.2,865.2 1344.2,859.7 1345.1,853.8 1346.0,847.7 1346.9,841.2 1347.9,834.4 1348.8,827.4 1349.7,820.0 1350.6,812.4 1351.5,804.5 1352.5,796.3 1353.4,787.9 1354.3,779.2 1355.2,770.3 1356.2,761.2 1357.1,751.9 1358.0,742.3 1358.9,732.6 1359.9,722.6 1360.8,712.5 1361.7,702.3 1362.6,691.8 1363.6,681.3 1364.5,670.6 1365.4,659.8 1366.3,648.8 1367.3,637.8 1368.2,626.7 1369.1,615.5 1370.0,604.3 1370.9,593.0 1371.9,581.7 1372.8,570.3 1373.7,559.0 1374.6,547.6 1375.6,536.2 1376.5,524.9 1377.4,513.6 1378.3,502.4 1379.3,491.2 1380.2,480.1 1381.1,469.1 1382.0,458.1 1383.0,447.3 1383.9,436.6 1384.8,426.1 1385.7,415.6 1386.7,405.4 1387.6,395.3 1388.5,385.3 1389.4,375.6 1390.3,366.0 1391.3,356.7 1392.2,347.6 1393.1,338.7 1394.0,330.0 1395.0,321.6 1395.9,313.4 1396.8,305.5 1397.7,297.9 1398.7,290.5 1399.6,283.5 1400.5,276.7 1401.4,270.2 1402.4,264.1 1403.3,258.2 1404.2,252.7 1405.1,247.5 1406.1,242.7 1407.0,238.1 1407.9,234.0 1408.8,230.1 1409.7,226.7 1410.7,223.5 1411.6,220.8 1412.5,218.4 1413.4,216.3 1414.4,214.7 1415.3,213.4 1416.2,212.4 1417.1,211.9 1418.1,211.7 1419.0,211.9 1419.9,212.4 1420.8,213.4 1421.8,214.7 1422.7,216.3 1423.6,218.4 1424.5,220.8 1425.5,223.5 1426.4,226.7 1427.3,230.1 1428.2,234.0 1429.1,238.1 1430.1,242.7 1431.0,247.5 1431.9,252.7 1432.8,258.2 1433.8,264.1 1434.7,270.2 1435.6,276.7 1436.5,283.5 1437.5,290.5 1438.4,297.9 1439.3,305.5 1440.2,313.4 1441.2,321.6 1442.1,330.0 1443.0,338.7 1443.9,347.6 1444.9,356.7 1445.8,366.0 1446.7,375.6 1447.6,385.3 1448.5,395.3 1449.5,405.4 1450.4,415.6 1451.3,426.1 1452.2,436.6 1453.2,447.3 1454.1,458.1 1455.0,469.1 1455.9,480.1 1456.9,491.2 1457.8,502.4 1458.7,513.6 1459.6,524.9 1460.6,536.2 1461.5,547.6 1462.4,558.9 1463.3,570.3 1464.3,581.7 1465.2,593.0 1466.1,604.3 1467.0,615.5 1467.9,626.7 1468.9,637.8 1469.8,648.8 1470.7,659.8 1471.6,670.6 1472.6,681.3 1473.5,691.8 1474.4,702.3 1475.3,712.5 1476.3,722.6 1477.2,732.6 1478.1,742.3 1479.0,751.9 1480.0,761.2 1480.9,770.3 1481.8,779.2 1482.7,787.9 1483.7,796.3 1484.6,804.5 1485.5,812.4 1486.4,820.0 1487.3,827.4 1488.3,834.4 1489.2,841.2 1490.1,847.7 1491.0,853.8 1492.0,859.7 1492.9,865.2 1493.8,870.4 1494.7,875.2 1495.7,879.8 1496.6,883.9 1497.5,887.8 1498.4,891.2 1499.4,894.4 1500.3,897.1 1501.2,899.5 1502.1,901.6 1503.1,903.2 1504.0,904.5 1504.9,905.5 1505.8,906.0 1506.7,906.2 1507.7,906.0 1508.6,905.5 1509.5,904.5 1510.4,903.2 1511.4,901.6 1512.3,899.5 1513.2,897.1 1514.1,894.4 1515.1,891.2 1516.0,887.8 1516.9,883.9 1517.8,879.8 1518.8,875.2 1519.7,870.4 1520.6,865.2 1521.5,859.7 1522.5,853.8 1523.4,847.7 1524.3,841.2 1525.2,834.4 1526.1,827.4 1527.1,820.0 1528.0,812.4 1528.9,804.5 1529.8,796.3 1530.8,787.9 1531.7,779.2 1532.6,770.3 1533.5,761.2 1534.5,751.9 1535.4,742.3 1536.3,732.6 1537.2,722.6 1538.2,712.5 1539.1,702.3 1540.0,691.8 1540.9,681.3 1541.9,670.6 1542.8,659.8 1543.7,648.8 1544.6,637.8 1545.5,626.7 1546.5,615.5 1547.4,604.3 1548.3,593.0 1549.2,581.7 1550.2,570.3 1551.1,559.0 1552.0,547.6 1552.9,536.2 1553.9,524.9 1554.8,513.6 1555.7,502.4 1556.6,491.2 1557.6,480.1 1558.5,469.1 1559.4,458.1 1560.3,447.3 1561.3,436.6 1562.2,426.1 1563.1,415.6 1564.0,405.4 1564.9,395.3 1565.9,385.3 1566.8,375.6 1567.7,366.0 1568.6,356.7 1569.6,347.6 1570.5,338.7 1571.4,330.0 1572.3,321.6 1573.3,313.4 1574.2,305.5 1575.1,297.9 1576.0,290.5 1577.0,283.5 1577.9,276.7 1578.8,270.2 1579.7,264.1 1580.7,258.2 1581.6,252.7 1582.5,247.5 1583.4,242.7 1584.3,238.1 1585.3,234.0 1586.2,230.1 1587.1,226.7 1588.0,223.5 1589.0,220.8 1589.9,218.4 1590.8,216.3 1591.7,214.7 1592.7,213.4 1593.6,212.4 1594.5,211.9 1595.4,211.7 1596.4,211.9 1597.3,212.4 1598.2,213.4 1599.1,214.7 1600.1,216.3 1601.0,218.4 1601.9,220.8 1602.8,223.5 1603.7,226.7 1604.7,230.1 1605.6,234.0 1606.5,238.1 1607.4,242.7 1608.4,247.5 1609.3,252.7 1610.2,258.2 1611.1,264.1 1612.1,270.2 1613.0,276.7 1613.9,283.5 1614.8,290.5 1615.8,297.9 1616.7,305.5 1617.6,313.4 1618.5,321.6 1619.5,330.0 1620.4,338.7 1621.3,347.6 1622.2,356.7 1623.1,366.0 1624.1,375.6 1625.0,385.3 1625.9,395.3 1626.8,405.4 1627.8,415.6 1628.7,426.1 1629.6,436.6 1630.5,447.3 1631.5,458.1 1632.4,469.1 1633.3,480.1 1634.2,491.2 1635.2,502.4 1636.1,513.6 1637.0,524.9 1637.9,536.2 1638.9,547.6 1639.8,558.9 1640.7,570.3 1641.6,581.7 1642.5,593.0 1643.5,604.3 1644.4,615.5 1645.3,626.7 1646.2,637.8 1647.2,648.8 1648.1,659.8 1649.0,670.6 1649.9,681.3 1650.9,691.8 1651.8,702.3 1652.7,712.5 1653.6,722.6 1654.6,732.6 1655.5,742.3 1656.4,751.9 1657.3,761.2 1658.3,770.3 1659.2,779.2 1660.1,787.9 1661.0,796.3 1661.9,804.5 1662.9,812.4 1663.8,820.0 1664.7,827.4 1665.6,834.4 1666.6,841.2 1667.5,847.7 1668.4,853.8 1669.3,859.7 1670.3,865.2 1671.2,870.4 1672.1,875.2 1673.0,879.8 1674.0,883.9 1674.9,887.8 1675.8,891.2 1676.7,894.4 1677.7,897.1 1678.6,899.5 1679.5,901.6 1680.4,903.2 1681.3,904.5 1682.3,905.5 1683.2,906.0 1684.1,906.2 1685.0,906.0 1686.0,905.5 1686.9,904.5 1687.8,903.2 1688.7,901.6 1689.7,899.5 1690.6,897.1 1691.5,894.4 1692.4,891.2 1693.4,887.8 1694.3,883.9 1695.2,879.8 1696.1,875.2 1697.1,870.4 1698.0,865.2 1698.9,859.7 1699.8,853.8 1700.7,847.7 1701.7,841.2 1702.6,834.4 1703.5,827.4 1704.4,820.0 1705.4,812.4 1706.3,804.5 1707.2,796.3 1708.1,787.9 1709.1,779.2 1710.0,770.3 1710.9,761.2 1711.8,751.9 1712.8,742.3 1713.7,732.6 1714.6,722.6 1715.5,712.5 1716.5,702.3 1717.4,691.8 1718.3,681.3 1719.2,670.6 1720.1,659.8 1721.1,648.8 1722.0,637.8 1722.9,626.7 1723.8,615.5 1724.8,604.3 1725.7,593.0 1726.6,581.7 1727.5,570.3 1728.5,559.0 1729.4,547.6 1730.3,536.2 1731.2,524.9 1732.2,513.6 1733.1,502.4 1734.0,491.2 1734.9,480.1 1735.9,469.1 1736.8,458.1 1737.7,447.3 1738.6,436.6 1739.5,426.1 1740.5,415.6 1741.4,405.4 1742.3,395.3 1743.2,385.3 1744.2,375.6 1745.1,366.0 1746.0,356.7 1746.9,347.6 1747.9,338.7 1748.8,330.0 1749.7,321.6 1750.6,313.4 1751.6,305.5 1752.5,297.9 1753.4,290.5 1754.3,283.5 1755.3,276.7 1756.2,270.2 1757.1,264.1 1758.0,258.2 1758.9,252.7 1759.9,247.5 1760.8,242.7 1761.7,238.1 1762.6,234.0 1763.6,230.1 1764.5,226.7 1765.4,223.5 1766.3,220.8 1767.3,218.4 1768.2,216.3 1769.1,214.7 1770.0,213.4 1771.0,212.4 1771.9,211.9 1772.8,211.7 1773.7,211.9 1774.7,212.4 1775.6,213.4 1776.5,214.7 1777.4,216.3 1778.3,218.4 1779.3,220.8 1780.2,223.5 1781.1,226.7 1782.0,230.1 1783.0,234.0 1783.9,238.1 1784.8,242.7 1785.7,247.5 1786.7,252.7 1787.6,258.2 1788.5,264.1 1789.4,270.2 1790.4,276.7 1791.3,283.5 1792.2,290.5 1793.1,297.9 1794.0,305.5 1795.0,313.4 1795.9,321.6 1796.8,330.0 1797.7,338.7 1798.7,347.6 1799.6,356.7 1800.5,366.0 1801.4,375.6 1802.4,385.3 1803.3,395.3 1804.2,405.4 1805.1,415.6 1806.1,426.1 1807.0,436.6 1807.9,447.3 1808.8,458.1 1809.8,469.1 1810.7,480.1 1811.6,491.2 1812.5,502.4 1813.4,513.6 1814.4,524.9 1815.3,536.2 1816.2,547.6 1817.1,559.0 1818.1,570.3 1819.0,581.7 1819.9,593.0 1820.8,604.3 1821.8,615.5 1822.7,626.7 1823.6,637.8 1824.5,648.8 1825.5,659.8 1826.4,670.6 1827.3,681.3 1828.2,691.8 1829.2,702.3 1830.1,712.5 1831.0,722.6 1831.9,732.6 1832.8,742.3 1833.8,751.9 1834.7,761.2 1835.6,770.3 1836.5,779.2 1837.5,787.9 1838.4,796.3 1839.3,804.5 1840.2,812.4 1841.2,820.0 1842.1,827.4 1843.0,834.4 1843.9,841.2 1844.9,847.7 1845.8,853.8 1846.7,859.7 1847.6,865.2 1848.6,870.4 1849.5,875.2 1850.4,879.8 1851.3,883.9 1852.2,887.8 1853.2,891.2 1854.1,894.4 1855.0,897.1 1855.9,899.5 1856.9,901.6 1857.8,903.2 1858.7,904.5 1859.6,905.5 1860.6,906.0 1861.5,906.2 1862.4,906.0 1863.3,905.5 1864.3,904.5 1865.2,903.2 1866.1,901.6 1867.0,899.5 1868.0,897.1 1868.9,894.4 1869.8,891.2 1870.7,887.8 1871.6,883.9 1872.6,879.8 1873.5,875.2 1874.4,870.4 1875.3,865.2 1876.3,859.7 1877.2,853.8 1878.1,847.7 1879.0,841.2 1880.0,834.4 1880.9,827.4 1881.8,820.0 1882.7,812.4 1883.7,804.5 1884.6,796.3 1885.5,787.9 1886.4,779.2 1887.4,770.3 1888.3,761.2 1889.2,751.9 1890.1,742.3 1891.0,732.6 1892.0,722.6 1892.9,712.5 1893.8,702.3 1894.7,691.8 1895.7,681.3 1896.6,670.6 1897.5,659.8 1898.4,648.8 1899.4,637.8 1900.3,626.7 1901.2,615.5 1902.1,604.3 1903.1,593.0 1904.0,581.7 1904.9,570.3 1905.8,559.0 1906.8,547.6 1907.7,536.2 1908.6,524.9 1909.5,513.6 1910.4,502.4 1911.4,491.2 1912.3,480.1 1913.2,469.1 1914.1,458.1 1915.1,447.3 1916.0,436.6 1916.9,426.1 1917.8,415.6 1918.8,405.4 1919.7,395.3 1920.6,385.3 1921.5,375.6 1922.5,366.0 1923.4,356.7 1924.3,347.6 1925.2,338.7 1926.2,330.0 1927.1,321.6 1928.0,313.4 1928.9,305.5 1929.8,297.9 1930.8,290.5 1931.7,283.5 1932.6,276.7 1933.5,270.2 1934.5,264.1 1935.4,258.2 1936.3,252.7 1937.2,247.5 1938.2,242.7 1939.1,238.1 1940.0,234.0 1940.9,230.1 1941.9,226.7 1942.8,223.5 1943.7,220.8 1944.6,218.4 1945.6,216.3 1946.5,214.7 1947.4,213.4 1948.3,212.4 1949.2,211.9 1950.2,211.7 1951.1,211.9 1952.0,212.4 1952.9,213.4 1953.9,214.7 1954.8,216.3 1955.7,218.4 1956.6,220.8 1957.6,223.5 1958.5,226.7 1959.4,230.1 1960.3,234.0 1961.3,238.1 1962.2,242.7 1963.1,247.5 1964.0,252.7 1965.0,258.2 1965.9,264.1 1966.8,270.2 1967.7,276.7 1968.6,283.5 1969.6,290.5 1970.5,297.9 1971.4,305.5 1972.3,313.4 1973.3,321.6 1974.2,330.0 1975.1,338.7 1976.0,347.6 1977.0,356.7 1977.9,366.0 1978.8,375.6 1979.7,385.3 1980.7,395.3 1981.6,405.4 1982.5,415.6 1983.4,426.1 1984.4,436.6 1985.3,447.3 1986.2,458.1 1987.1,469.1 1988.0,480.1 1989.0,491.2 1989.9,502.4 1990.8,513.6 1991.7,524.9 1992.7,536.2 1993.6,547.6 1994.5,558.9 1995.4,570.3 1996.4,581.7 1997.3,593.0 1998.2,604.3 1999.1,615.5 2000.1,626.7 2001.0,637.8 2001.9,648.8 2002.8,659.8 2003.8,670.6 2004.7,681.3 2005.6,691.8 2006.5,702.3 2007.4,712.5 2008.4,722.6 2009.3,732.6 2010.2,742.3 2011.1,751.9 2012.1,761.2 2013.0,770.3 2013.9,779.2 2014.8,787.9 2015.8,796.3 2016.7,804.5 2017.6,812.4 2018.5,820.0 2019.5,827.4 2020.4,834.4 2021.3,841.2 2022.2,847.7 2023.2,853.8 2024.1,859.7 2025.0,865.2 2025.9,870.4 2026.8,875.2 2027.8,879.8 2028.7,883.9 2029.6,887.8 2030.5,891.2 2031.5,894.4 2032.4,897.1 2033.3,899.5 2034.2,901.6 2035.2,903.2 2036.1,904.5 2037.0,905.5 2037.9,906.0 2038.9,906.2 2039.8,906.0 2040.7,905.5 2041.6,904.5 2042.6,903.2 2043.5,901.6 2044.4,899.5 2045.3,897.1 2046.2,894.4 2047.2,891.2 2048.1,887.8 2049.0,883.9 2049.9,879.8 2050.9,875.2 2051.8,870.4 2052.7,865.2 2053.6,859.7 2054.6,853.8 2055.5,847.7 2056.4,841.2 2057.3,834.4 2058.3,827.4 2059.2,820.0 2060.1,812.4 2061.0,804.5 2062.0,796.3 2062.9,787.9 2063.8,779.2 2064.7,770.3 2065.6,761.2 2066.6,751.9 2067.5,742.3 2068.4,732.6 2069.3,722.6 2070.3,712.5 2071.2,702.3 2072.1,691.8 2073.0,681.3 2074.0,670.6 2074.9,659.8 2075.8,648.8 2076.7,637.8 2077.7,626.7 2078.6,615.5 2079.5,604.3 2080.4,593.0 2081.4,581.7 2082.3,570.3" fill="none" stroke="#0a74c0" stroke-width="1.15" stroke-linejoin="round"/><line x1="309.75" y1="211.5" x2="309.75" y2="906.5" stroke="#3a3a3a" stroke-width="1"/><line x1="309" y1="906.5" x2="2083.7" y2="906.5" stroke="#262626" stroke-width="1.1"/><line x1="486.87" y1="889.3" x2="486.87" y2="906" stroke="#262626" stroke-width="1"/><line x1="664.24" y1="889.3" x2="664.24" y2="906" stroke="#262626" stroke-width="1"/><line x1="841.61" y1="889.3" x2="841.61" y2="906" stroke="#262626" stroke-width="1"/><line x1="1018.98" y1="889.3" x2="1018.98" y2="906" stroke="#262626" stroke-width="1"/><line x1="1196.35" y1="889.3" x2="1196.35" y2="906" stroke="#262626" stroke-width="1"/><line x1="1373.72" y1="889.3" x2="1373.72" y2="906" stroke="#262626" stroke-width="1"/><line x1="1551.09" y1="889.3" x2="1551.09" y2="906" stroke="#262626" stroke-width="1"/><line x1="1728.46" y1="889.3" x2="1728.46" y2="906" stroke="#262626" stroke-width="1"/><line x1="1905.83" y1="889.3" x2="1905.83" y2="906" stroke="#262626" stroke-width="1"/><line x1="2083.20" y1="889.3" x2="2083.20" y2="906" stroke="#262626" stroke-width="1"/><line x1="310" y1="211.70" x2="327.5" y2="211.70" stroke="#262626" stroke-width="1"/><line x1="310" y1="281.15" x2="327.5" y2="281.15" stroke="#262626" stroke-width="1"/><line x1="310" y1="350.60" x2="327.5" y2="350.60" stroke="#262626" stroke-width="1"/><line x1="310" y1="420.05" x2="327.5" y2="420.05" stroke="#262626" stroke-width="1"/><line x1="310" y1="489.50" x2="327.5" y2="489.50" stroke="#262626" stroke-width="1"/><line x1="310" y1="558.95" x2="327.5" y2="558.95" stroke="#262626" stroke-width="1"/><line x1="310" y1="628.40" x2="327.5" y2="628.40" stroke="#262626" stroke-width="1"/><line x1="310" y1="697.85" x2="327.5" y2="697.85" stroke="#262626" stroke-width="1"/><line x1="310" y1="767.30" x2="327.5" y2="767.30" stroke="#262626" stroke-width="1"/><line x1="310" y1="836.75" x2="327.5" y2="836.75" stroke="#262626" stroke-width="1"/><rect x="2015.5" y="222.5" width="57" height="15" fill="#fff" stroke="#262626" stroke-width="1"/><line x1="2015.5" y1="237.8" x2="2072.5" y2="237.8" stroke="#9a9a9a" stroke-width="1.2"/><line x1="2019" y1="230.5" x2="2058.6" y2="230.5" stroke="#0a74c0" stroke-width="1.1"/></svg><div style="position:absolute;left:1565px;width:1000px;text-align:center;top:224.66px;font-size:11px;line-height:12.65px;color:#262626;font-weight:400;white-space:nowrap;">1</div><div style="position:absolute;right:2247.2px;top:205.94px;font-size:12px;line-height:13.80px;color:#262626;font-weight:400;white-space:nowrap;">1</div><div style="position:absolute;right:2247.2px;top:275.39px;font-size:12px;line-height:13.80px;color:#262626;font-weight:400;white-space:nowrap;">0.8</div><div style="position:absolute;right:2247.2px;top:344.84px;font-size:12px;line-height:13.80px;color:#262626;font-weight:400;white-space:nowrap;">0.6</div><div style="position:absolute;right:2247.2px;top:414.29px;font-size:12px;line-height:13.80px;color:#262626;font-weight:400;white-space:nowrap;">0.4</div><div style="position:absolute;right:2247.2px;top:483.74px;font-size:12px;line-height:13.80px;color:#262626;font-weight:400;white-space:nowrap;">0.2</div><div style="position:absolute;right:2247.2px;top:553.19px;font-size:12px;line-height:13.80px;color:#262626;font-weight:400;white-space:nowrap;">0</div><div style="position:absolute;right:2247.2px;top:622.64px;font-size:12px;line-height:13.80px;color:#262626;font-weight:400;white-space:nowrap;">-0.2</div><div style="position:absolute;right:2247.2px;top:692.09px;font-size:12px;line-height:13.80px;color:#262626;font-weight:400;white-space:nowrap;">-0.4</div><div style="position:absolute;right:2247.2px;top:761.54px;font-size:12px;line-height:13.80px;color:#262626;font-weight:400;white-space:nowrap;">-0.6</div><div style="position:absolute;right:2247.2px;top:830.99px;font-size:12px;line-height:13.80px;color:#262626;font-weight:400;white-space:nowrap;">-0.8</div><div style="position:absolute;right:2247.2px;top:900.44px;font-size:12px;line-height:13.80px;color:#262626;font-weight:400;white-space:nowrap;">-1</div><div style="position:absolute;left:-190.2px;width:1000px;text-align:center;top:911.54px;font-size:12px;line-height:13.80px;color:#262626;font-weight:400;white-space:nowrap;">0</div><div style="position:absolute;left:-12.829999999999984px;width:1000px;text-align:center;top:911.54px;font-size:12px;line-height:13.80px;color:#262626;font-weight:400;white-space:nowrap;">0.001</div><div style="position:absolute;left:164.53999999999996px;width:1000px;text-align:center;top:911.54px;font-size:12px;line-height:13.80px;color:#262626;font-weight:400;white-space:nowrap;">0.002</div><div style="position:absolute;left:341.90999999999985px;width:1000px;text-align:center;top:911.54px;font-size:12px;line-height:13.80px;color:#262626;font-weight:400;white-space:nowrap;">0.003</div><div style="position:absolute;left:519.2799999999999px;width:1000px;text-align:center;top:911.54px;font-size:12px;line-height:13.80px;color:#262626;font-weight:400;white-space:nowrap;">0.004</div><div style="position:absolute;left:696.6499999999999px;width:1000px;text-align:center;top:911.54px;font-size:12px;line-height:13.80px;color:#262626;font-weight:400;white-space:nowrap;">0.005</div><div style="position:absolute;left:874.0199999999998px;width:1000px;text-align:center;top:911.54px;font-size:12px;line-height:13.80px;color:#262626;font-weight:400;white-space:nowrap;">0.006</div><div style="position:absolute;left:1051.3899999999999px;width:1000px;text-align:center;top:911.54px;font-size:12px;line-height:13.80px;color:#262626;font-weight:400;white-space:nowrap;">0.007</div><div style="position:absolute;left:1228.7599999999998px;width:1000px;text-align:center;top:911.54px;font-size:12px;line-height:13.80px;color:#262626;font-weight:400;white-space:nowrap;">0.008</div><div style="position:absolute;left:1406.1299999999999px;width:1000px;text-align:center;top:911.54px;font-size:12px;line-height:13.80px;color:#262626;font-weight:400;white-space:nowrap;">0.009</div><div style="position:absolute;left:1583.5px;width:1000px;text-align:center;top:911.54px;font-size:12px;line-height:13.80px;color:#262626;font-weight:400;white-space:nowrap;">0.01</div><div style="position:absolute;left:696.7px;width:1000px;text-align:center;top:923.44px;font-size:13.2px;line-height:15.18px;color:#262626;font-weight:400;white-space:nowrap;">Time (s)</div><div style="position:absolute;left:176px;top:551px;width:200px;height:16px;line-height:16px;text-align:center;font-size:13.2px;color:#262626;transform:rotate(-90deg);white-space:nowrap">Amplitude</div><div style="position:absolute;left:2106px;top:191px;width:437px;height:746px;border:1px solid #b4b4b4;background:#f5f5f5"></div><div style="position:absolute;left:2110px;top:196px;width:430px;height:29px;background:#d9d9d9"></div><div style="position:absolute;left:1825px;width:1000px;text-align:center;top:201.38px;font-size:15px;line-height:17.25px;color:#262626;font-weight:700;white-space:nowrap;">Plot Tools</div><svg style="position:absolute;left:2110px;top:229px" width="14" height="14"><rect x="0.5" y="0.5" width="12" height="12" fill="#fff" stroke="#555"/><path d="M1.8 6.6 L4.8 9.8 L11 2.2" fill="none" stroke="#111" stroke-width="1.7"/></svg><div style="position:absolute;left:2126.3px;top:228.30px;font-size:14px;line-height:16.10px;color:#262626;font-weight:400;white-space:nowrap;">Show Legend</div><div style="position:absolute;left:2110px;top:257.8px;width:429px;height:148px;border:1px solid #a9a9a9;background:#f5f5f5"></div><div style="position:absolute;left:2111px;top:278.8px;width:429px;height:1px;background:#a9a9a9"></div><div style="position:absolute;left:2113.8px;top:260.70px;font-size:14px;line-height:16.10px;color:#262626;font-weight:400;white-space:nowrap;">Y-Axis Scaling</div><svg style="position:absolute;left:2118.2px;top:282.0px" width="15.0" height="15.0"><circle cx="7.5" cy="7.5" r="6.0" fill="#fff" stroke="#333" stroke-width="1"/><circle cx="7.5" cy="7.5" r="3" fill="#1a1a1a"/></svg><svg style="position:absolute;left:2118.2px;top:311.90000000000003px" width="15.0" height="15.0"><circle cx="7.5" cy="7.5" r="6.0" fill="#fff" stroke="#333" stroke-width="1"/></svg><div style="position:absolute;left:2136.2px;top:281.70px;font-size:14px;line-height:16.10px;color:#262626;font-weight:400;white-space:nowrap;">Autoscale</div><div style="position:absolute;left:2136.2px;top:311.70px;font-size:14px;line-height:16.10px;color:#262626;font-weight:400;white-space:nowrap;">Set Y-Limits</div><div style="position:absolute;left:2139.9px;top:342.30px;font-size:14px;line-height:16.10px;color:#262626;font-weight:400;white-space:nowrap;">Min</div><div style="position:absolute;left:2139.9px;top:372.30px;font-size:14px;line-height:16.10px;color:#262626;font-weight:400;white-space:nowrap;">Max</div><div style="position:absolute;left:2229px;top:339.8px;width:68px;height:18px;border:1px solid #d8d8d8;background:#f5f5f5"></div><div style="position:absolute;left:2229px;top:369.8px;width:68px;height:18px;border:1px solid #d8d8d8;background:#f5f5f5"></div><div style="position:absolute;left:2232.5px;top:342.40px;font-size:14px;line-height:16.10px;color:#bdbdbd;font-weight:400;white-space:nowrap;">-1</div><div style="position:absolute;left:2232.5px;top:372.40px;font-size:14px;line-height:16.10px;color:#bdbdbd;font-weight:400;white-space:nowrap;">1</div><div style="position:absolute;left:2524px;top:279.8px;width:15px;height:126px;background:#f0f0f0"></div><div style="position:absolute;left:2524px;top:296.2px;width:14px;height:66px;background:#c2c2c2"></div><svg style="position:absolute;left:2524px;top:282.8px" width="15" height="10"><path d="M4 6.5 L7.5 3 L11 6.5 Z" fill="#a0a0a0"/></svg><svg style="position:absolute;left:2524px;top:391.8px" width="15" height="10"><path d="M4 3 L7.5 6.5 L11 3 Z" fill="#404040"/></svg><div style="position:absolute;left:2110px;top:417.8px;width:429px;height:148px;border:1px solid #a9a9a9;background:#f5f5f5"></div><div style="position:absolute;left:2111px;top:438.8px;width:429px;height:1px;background:#a9a9a9"></div><div style="position:absolute;left:2113.8px;top:420.70px;font-size:14px;line-height:16.10px;color:#262626;font-weight:400;white-space:nowrap;">X-Axis Scaling</div><svg style="position:absolute;left:2118.2px;top:442.0px" width="15.0" height="15.0"><circle cx="7.5" cy="7.5" r="6.0" fill="#f5f5f5" stroke="#c4c4c4" stroke-width="1"/><circle cx="7.5" cy="7.5" r="3" fill="#b0b0b0"/></svg><svg style="position:absolute;left:2118.2px;top:471.90000000000003px" width="15.0" height="15.0"><circle cx="7.5" cy="7.5" r="6.0" fill="#f5f5f5" stroke="#c4c4c4" stroke-width="1"/></svg><div style="position:absolute;left:2136.2px;top:441.70px;font-size:14px;line-height:16.10px;color:#a8a8a8;font-weight:400;white-space:nowrap;">Autoscale</div><div style="position:absolute;left:2136.2px;top:471.70px;font-size:14px;line-height:16.10px;color:#a8a8a8;font-weight:400;white-space:nowrap;">Set X-Limits</div><div style="position:absolute;left:2139.9px;top:502.30px;font-size:14px;line-height:16.10px;color:#a8a8a8;font-weight:400;white-space:nowrap;">Min</div><div style="position:absolute;left:2139.9px;top:532.30px;font-size:14px;line-height:16.10px;color:#a8a8a8;font-weight:400;white-space:nowrap;">Max</div><div style="position:absolute;left:2229px;top:499.8px;width:68px;height:18px;border:1px solid #d8d8d8;background:#f5f5f5"></div><div style="position:absolute;left:2229px;top:529.8px;width:68px;height:18px;border:1px solid #d8d8d8;background:#f5f5f5"></div><div style="position:absolute;left:2232.5px;top:502.40px;font-size:14px;line-height:16.10px;color:#bdbdbd;font-weight:400;white-space:nowrap;">0</div><div style="position:absolute;left:2232.5px;top:532.40px;font-size:14px;line-height:16.10px;color:#bdbdbd;font-weight:400;white-space:nowrap;">0.01</div><div style="position:absolute;left:2524px;top:439.8px;width:15px;height:126px;background:#f0f0f0"></div><div style="position:absolute;left:2524px;top:456.2px;width:14px;height:66px;background:#c2c2c2"></div><svg style="position:absolute;left:2524px;top:442.8px" width="15" height="10"><path d="M4 6.5 L7.5 3 L11 6.5 Z" fill="#a0a0a0"/></svg><svg style="position:absolute;left:2524px;top:551.8px" width="15" height="10"><path d="M4 3 L7.5 6.5 L11 3 Z" fill="#404040"/></svg><div style="position:absolute;left:248px;top:954px;width:2304px;height:1px;background:#8c8c8c"></div><div style="position:absolute;left:248px;top:955px;width:2304px;height:1px;background:#e8e8e8"></div><div style="position:absolute;left:248px;top:956px;width:2304px;height:22px;background:#014277"></div><div style="position:absolute;left:273.2px;top:962.02px;font-size:13px;line-height:14.95px;color:#fff;font-weight:400;white-space:nowrap;">Channels</div><div style="position:absolute;left:2542px;top:962px;width:2px;height:2px;background:#fff"></div><div style="position:absolute;left:2542px;top:966px;width:2px;height:2px;background:#fff"></div><div style="position:absolute;left:2542px;top:970px;width:2px;height:2px;background:#fff"></div><div style="position:absolute;left:248px;top:978px;width:2304px;height:392px;background:#f5f5f5"></div><div style="position:absolute;left:257px;top:989px;width:2293px;height:369px;border-left:1px solid #a9a9a9;border-top:1px solid #c8c8c8;border-right:1px solid #c8c8c8;border-bottom:1px solid #c8c8c8;background:#fff"></div><div style="position:absolute;left:258px;top:990px;width:2292px;height:25px;background:#f5f5f5"></div><div style="position:absolute;left:258px;top:1015px;width:2292px;height:1px;background:#a0a0a0"></div><div style="position:absolute;left:258px;top:1016px;width:2292px;height:23px;background:#fff"></div><div style="position:absolute;left:258px;top:1039px;width:2292px;height:1px;background:#cdcdcd"></div><div style="position:absolute;left:258px;top:1040px;width:2292px;height:22px;background:#f5f5f5"></div><div style="position:absolute;left:258px;top:1062px;width:2292px;height:1px;background:#999"></div><div style="position:absolute;left:317px;top:990px;width:1px;height:72px;background:#a8a8a8"></div><div style="position:absolute;left:764px;top:990px;width:1px;height:72px;background:#a8a8a8"></div><div style="position:absolute;left:1211px;top:990px;width:1px;height:72px;background:#a8a8a8"></div><div style="position:absolute;left:1656px;top:990px;width:1px;height:72px;background:#a8a8a8"></div><div style="position:absolute;left:2103px;top:990px;width:1px;height:72px;background:#a8a8a8"></div><div style="position:absolute;left:261.1px;top:997.44px;font-size:12px;line-height:13.80px;color:#1a1a1a;font-weight:700;white-space:nowrap;letter-spacing:-0.15px;">Add</div><div style="position:absolute;left:321.5px;top:997.44px;font-size:12px;line-height:13.80px;color:#1a1a1a;font-weight:700;white-space:nowrap;letter-spacing:-0.15px;">ChannelID</div><div style="position:absolute;left:768.4px;top:997.44px;font-size:12px;line-height:13.80px;color:#1a1a1a;font-weight:700;white-space:nowrap;letter-spacing:-0.15px;">Name</div><div style="position:absolute;left:1214px;top:997.44px;font-size:12px;line-height:13.80px;color:#1a1a1a;font-weight:700;white-space:nowrap;letter-spacing:-0.15px;">Output Type</div><div style="position:absolute;left:1660px;top:997.44px;font-size:12px;line-height:13.80px;color:#1a1a1a;font-weight:700;white-space:nowrap;letter-spacing:-0.15px;">Range</div><div style="position:absolute;left:2107px;top:997.44px;font-size:12px;line-height:13.80px;color:#1a1a1a;font-weight:700;white-space:nowrap;letter-spacing:-0.15px;">Amplitude(p-p)</div><div style="position:absolute;left:321.5px;top:1021.64px;font-size:12px;line-height:13.80px;color:#333;font-weight:400;white-space:nowrap;">1</div><div style="position:absolute;left:321.5px;top:1044.64px;font-size:12px;line-height:13.80px;color:#333;font-weight:400;white-space:nowrap;">2</div><div style="position:absolute;left:767.8px;top:1021.64px;font-size:12px;line-height:13.80px;color:#333;font-weight:400;white-space:nowrap;letter-spacing:-0.2px;">Audio3_1</div><div style="position:absolute;left:1214px;top:1021.64px;font-size:12px;line-height:13.80px;color:#333;font-weight:400;white-space:nowrap;">Audio</div><div style="position:absolute;left:1660.5px;top:1021.64px;font-size:12px;line-height:13.80px;color:#333;font-weight:400;white-space:nowrap;letter-spacing:-0.1px;">-1.0 to +1.0</div><div style="position:absolute;left:2107px;top:1021.64px;font-size:12px;line-height:13.80px;color:#333;font-weight:400;white-space:nowrap;">2</div><svg style="position:absolute;left:1641px;top:1024px" width="9" height="6"><path d="M0.5 0.8 L8 0.8 L4.25 5 Z" fill="#666"/></svg><svg style="position:absolute;left:2087px;top:1024px" width="9" height="6"><path d="M0.5 0.8 L8 0.8 L4.25 5 Z" fill="#666"/></svg><div style="position:absolute;left:1214px;top:1044.64px;font-size:12px;line-height:13.80px;color:#333;font-weight:400;white-space:nowrap;">Audio</div><div style="position:absolute;left:1660.5px;top:1044.64px;font-size:12px;line-height:13.80px;color:#333;font-weight:400;white-space:nowrap;letter-spacing:-0.1px;">-1.0 to +1.0</div><div style="position:absolute;left:2107px;top:1044.64px;font-size:12px;line-height:13.80px;color:#333;font-weight:400;white-space:nowrap;">2</div><svg style="position:absolute;left:1641px;top:1047px" width="9" height="6"><path d="M0.5 0.8 L8 0.8 L4.25 5 Z" fill="#666"/></svg><svg style="position:absolute;left:2087px;top:1047px" width="9" height="6"><path d="M0.5 0.8 L8 0.8 L4.25 5 Z" fill="#666"/></svg><svg style="position:absolute;left:281px;top:1020px" width="14" height="14"><rect x="0.5" y="0.5" width="12" height="12" fill="#fff" stroke="#777"/><path d="M2.5 6.6 L5 9.6 L10.6 2.8" fill="none" stroke="#111" stroke-width="1.7"/></svg><svg style="position:absolute;left:281px;top:1043px" width="14" height="14"><rect x="0.5" y="0.5" width="12" height="12" fill="#fff" stroke="#777"/></svg><div style="position:absolute;left:0px;top:1370px;width:2552px;height:1px;background:#999"></div><div style="position:absolute;left:0px;top:1371px;width:2552px;height:21px;background:#e5e5e5"></div><svg style="position:absolute;left:6px;top:1373px" width="14" height="16"><rect x="1.5" y="2" width="1.6" height="11.5" fill="#999"/><path d="M10.8 2 L4 7.75 L10.8 13.5 Z" fill="#999"/></svg><svg style="position:absolute;left:2540px;top:1374px" width="12" height="16"><path d="M4.5 3.7 L15.5 3.7 L10 9.9 Z" fill="#989898"/><rect x="4" y="11" width="10" height="1.8" fill="#989898"/></svg>
</body></html>
